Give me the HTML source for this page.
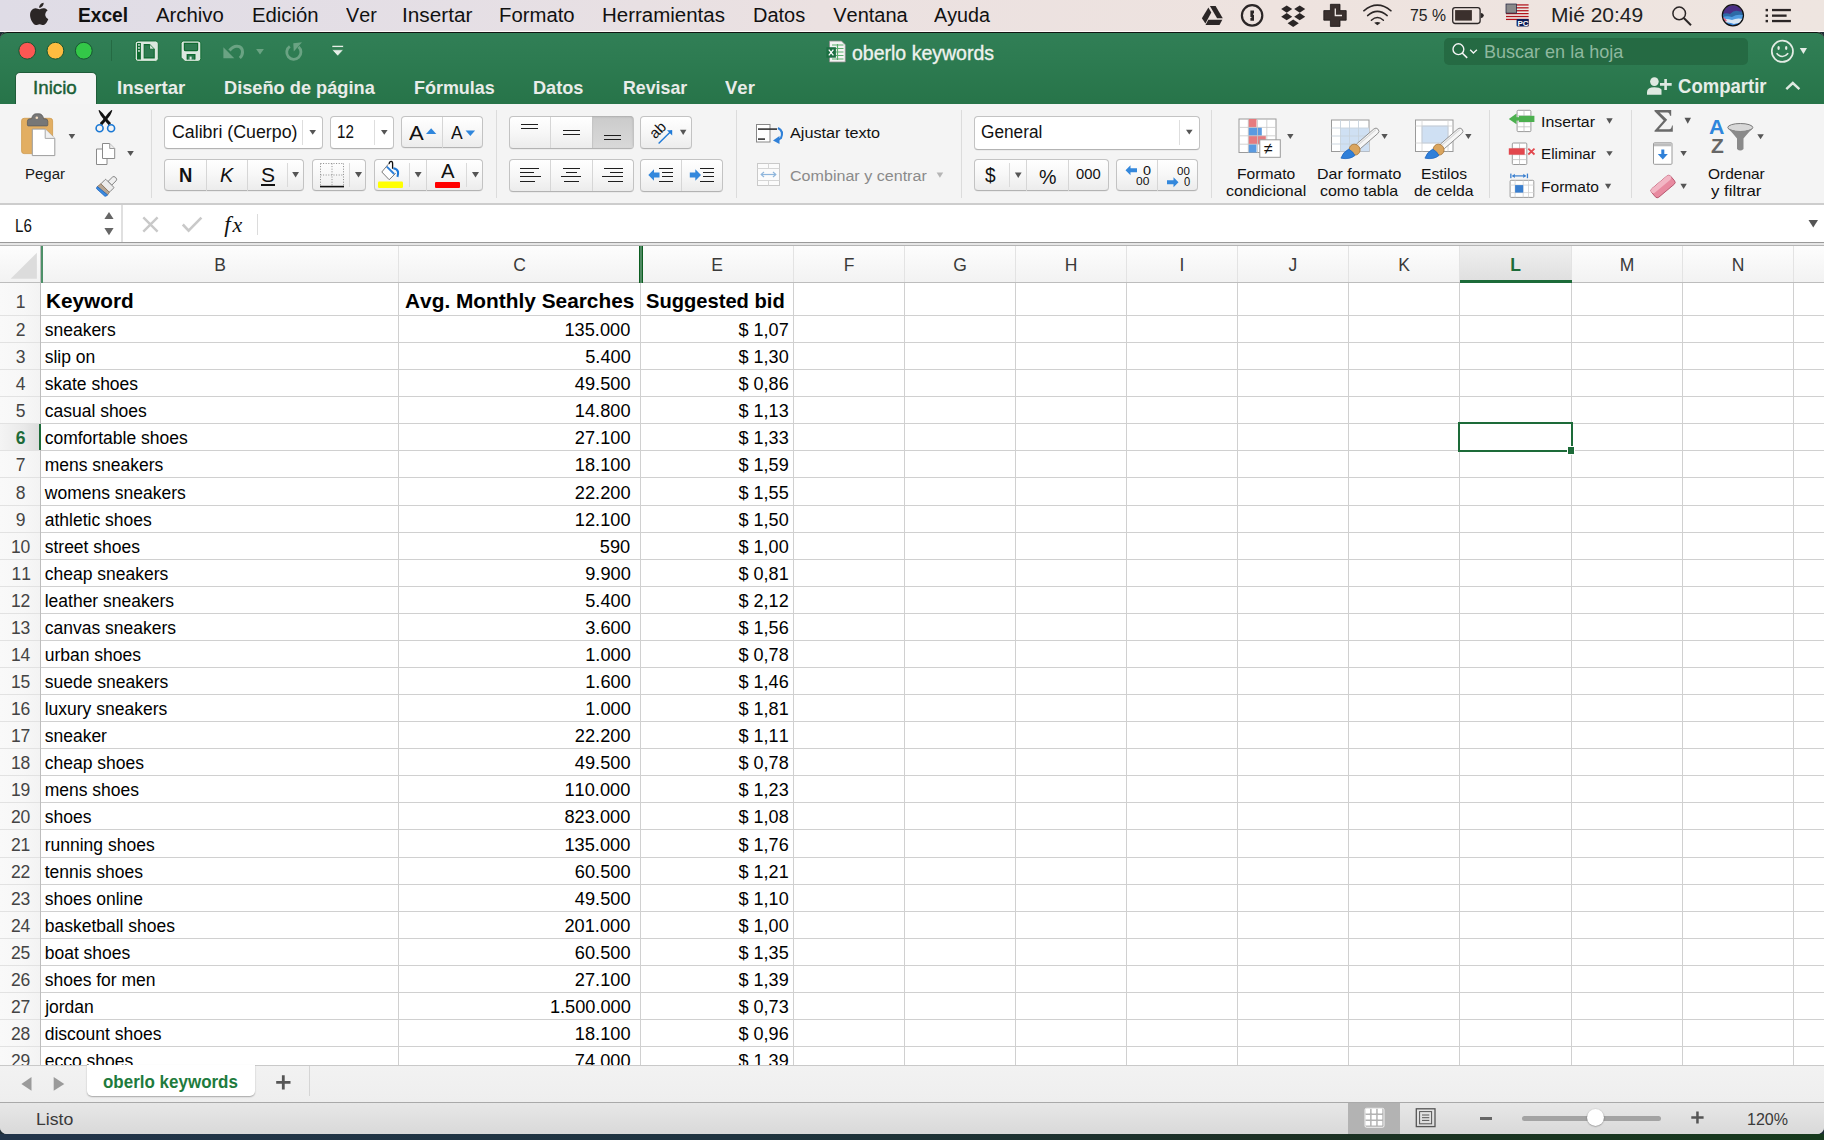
<!DOCTYPE html>
<html><head><meta charset="utf-8"><style>
html,body{margin:0;padding:0;}
body{width:1824px;height:1140px;overflow:hidden;position:relative;background:#1f2d36;font-family:"Liberation Sans",sans-serif;}
.t{position:absolute;white-space:pre;line-height:1;font-family:"Liberation Sans",sans-serif;font-kerning:none;}
.r{position:absolute;}
svg.r{overflow:visible;}
</style></head><body>
<div class="r" style="left:0px;top:0px;width:1824px;height:32px;background:linear-gradient(90deg,#dfdce6 0%,#e5dfe5 25%,#ebe1e1 45%,#eee3df 70%,#eee5e0 100%);"></div>
<div class="r" style="left:0px;top:30.5px;width:1824px;height:1.0px;background:rgba(255,250,248,0.85);"></div>
<div class="t" style="left:78.40px;top:5.37px;font-size:20px;color:#111;font-weight:bold;font-style:normal;transform:scaleX(0.9579);transform-origin:0 0;">Excel</div>
<div class="t" style="left:156.20px;top:5.37px;font-size:20px;color:#111;font-weight:normal;font-style:normal;transform:scaleX(1.0165);transform-origin:0 0;">Archivo</div>
<div class="t" style="left:251.90px;top:5.37px;font-size:20px;color:#111;font-weight:normal;font-style:normal;transform:scaleX(1.0152);transform-origin:0 0;">Edición</div>
<div class="t" style="left:345.70px;top:5.37px;font-size:20px;color:#111;font-weight:normal;font-style:normal;transform:scaleX(0.9867);transform-origin:0 0;">Ver</div>
<div class="t" style="left:402.30px;top:5.37px;font-size:20px;color:#111;font-weight:normal;font-style:normal;transform:scaleX(1.0383);transform-origin:0 0;">Insertar</div>
<div class="t" style="left:499.30px;top:5.37px;font-size:20px;color:#111;font-weight:normal;font-style:normal;transform:scaleX(1.0161);transform-origin:0 0;">Formato</div>
<div class="t" style="left:602.40px;top:5.37px;font-size:20px;color:#111;font-weight:normal;font-style:normal;transform:scaleX(1.0242);transform-origin:0 0;">Herramientas</div>
<div class="t" style="left:753.00px;top:5.37px;font-size:20px;color:#111;font-weight:normal;font-style:normal;">Datos</div>
<div class="t" style="left:833.20px;top:5.37px;font-size:20px;color:#111;font-weight:normal;font-style:normal;">Ventana</div>
<div class="t" style="left:934.00px;top:5.37px;font-size:20px;color:#111;font-weight:normal;font-style:normal;transform:scaleX(0.9858);transform-origin:0 0;">Ayuda</div>
<div class="t" style="left:1409.50px;top:6.90px;font-size:17.4px;color:#222;font-weight:normal;font-style:normal;transform:scaleX(0.9074);transform-origin:0 0;">75 %</div>
<svg class="r" style="left:28px;top:2px" width="22" height="25" viewBox="0 0 22 25"><g transform="translate(0.6 -0.2) scale(1.1 1.1)"><path d="M15.1 11.7c-.03-2.6 2.1-3.8 2.2-3.9-1.2-1.8-3.1-2-3.7-2-1.6-.16-3.1.93-3.9.93-.8 0-2-.9-3.3-.9-1.7.03-3.3 1-4.2 2.5-1.8 3.1-.5 7.7 1.3 10.2.85 1.25 1.9 2.6 3.2 2.6 1.3-.05 1.8-.83 3.3-.83 1.6 0 2 .83 3.4.8 1.4-.03 2.3-1.27 3.1-2.5 1-1.4 1.4-2.8 1.4-2.9-.03-.01-2.7-1.04-2.8-4.1zM12.6 4.1c.7-.86 1.2-2.05 1.05-3.25-1.02.04-2.25.68-2.98 1.53-.65.75-1.23 1.97-1.07 3.13 1.13.09 2.29-.58 3-1.41z" fill="#2b2626"/></g></svg>
<svg class="r" style="left:1200px;top:4px" width="25" height="23" viewBox="0 0 25 23"><g fill="#2b2626">
      <polygon points="9.9,2 15.6,2 22.8,14.3 17.1,14.3"/>
      <polygon points="8.4,3.4 11.3,8.4 5.4,19.6 1.9,14.3"/>
      <polygon points="8.3,15.8 22.3,15.8 19.5,21 5.5,21"/>
    </g></svg>
<svg class="r" style="left:1239px;top:3px" width="27" height="25" viewBox="0 0 27 25"><circle cx="13.1" cy="12.4" r="10.2" fill="none" stroke="#2b2626" stroke-width="2.2"/>
      <path d="M11.4 7.5 h3.6 v3 h-1 v1.3 h1 v5.9 h-3.6 v-2.6 h1 v-1 h-1z" fill="#2b2626"/></svg>
<svg class="r" style="left:1279px;top:3px" width="28" height="26" viewBox="0 0 28 26"><g fill="#2b2626"><polygon points="2.2,6.1 7.7,2.4999999999999996 13.2,6.1 7.7,9.7"/><polygon points="15.2,6.1 20.7,2.4999999999999996 26.2,6.1 20.7,9.7"/><polygon points="2.2,13.7 7.7,10.1 13.2,13.7 7.7,17.3"/><polygon points="15.2,13.7 20.7,10.1 26.2,13.7 20.7,17.3"/><polygon points="8.6,20.3 14.2,16.5 19.799999999999997,20.3 14.2,24.1"/></g></svg>
<svg class="r" style="left:1322px;top:3px" width="26" height="26" viewBox="0 0 26 26"><path d="M8.4 1.3 h9.6 v6.3 h6.2 v9.6 h-6.2 v6.2 h-9.6 v-6.2 h-6.6 v-9.6 h6.6z" fill="#3a302e" stroke="#1c1616" stroke-width="0.8"/>
      <path d="M13.3 5.5 v7 h6.7" fill="none" stroke="#f0e8e6" stroke-width="1.3"/></svg>
<svg class="r" style="left:1362px;top:3px" width="31" height="25" viewBox="0 0 31 25"><g fill="none" stroke="#2b2626" stroke-width="1.5" stroke-linecap="round">
      <path d="M1.8 7.8 Q15.4 -3.5 29 7.8"/>
      <path d="M5.6 12.6 Q15.4 4.2 25.2 12.6"/>
      <path d="M9.4 17.2 Q15.4 11.8 21.4 17.2"/>
    </g><path d="M12.2 19.8 L15.4 22.3 L18.6 19.8 Q15.4 18 12.2 19.8z" fill="#2b2626"/></svg>
<svg class="r" style="left:1450px;top:5px" width="38" height="21" viewBox="0 0 38 21"><rect x="2.7" y="2.6" width="27.4" height="15.9" rx="2.4" fill="none" stroke="#2b2626" stroke-width="1.3"/>
      <rect x="5.1" y="5.1" width="16.8" height="10.5" fill="#3b302d"/>
      <path d="M30.8 8 q3 0.5 3 2.6 q0 2 -3 2.6z" fill="#2b2626"/></svg>
<svg class="r" style="left:1506px;top:4px" width="24" height="24" viewBox="0 0 24 24"><rect x="0" y="0" width="22.6" height="15.6" fill="#ece8e4"/><rect x="0" y="0.30" width="22.6" height="1.25" fill="#b3131b"/><rect x="0" y="3.20" width="22.6" height="1.25" fill="#b3131b"/><rect x="0" y="6.10" width="22.6" height="1.25" fill="#b3131b"/><rect x="0" y="9.00" width="22.6" height="1.25" fill="#b3131b"/><rect x="0" y="11.90" width="22.6" height="1.25" fill="#b3131b"/><rect x="0" y="14.80" width="22.6" height="1.25" fill="#b3131b"/>
      <rect x="0" y="0" width="10.6" height="9.1" fill="#8a8a8a" stroke="#1a1d3a" stroke-width="0.7"/>
      <rect x="10.6" y="15" width="12.2" height="7.6" rx="1" fill="#0b1a55"/>
      <text x="11.5" y="21.8" font-family="Liberation Sans" font-weight="bold" font-size="8" fill="#fff">PC</text></svg>
<svg class="r" style="left:1670px;top:4px" width="24" height="24" viewBox="0 0 24 24"><circle cx="9.2" cy="9.4" r="6.3" fill="none" stroke="#2b2626" stroke-width="1.5"/>
      <path d="M13.8 14 L21 21.3" stroke="#2b2626" stroke-width="2"/></svg>
<svg class="r" style="left:1720px;top:3px" width="26" height="26" viewBox="0 0 26 26"><defs><clipPath id="sc"><circle cx="12.9" cy="12.3" r="10.4"/></clipPath></defs>
      <g clip-path="url(#sc)"><rect x="0" y="0" width="26" height="26" fill="#4b2f86"/>
      <path d="M0 12 Q6 9 10 11 Q14 7 18 8 Q22 9 26 8 V26 H0z" fill="#2d6aa6"/>
      <path d="M0 15 Q6 12 12 14 Q18 10 26 13 V26 H0z" fill="#4f9be0"/>
      <path d="M0 17 Q6 15 12 17 Q18 14 26 17 V26 H0z" fill="#d9e6f2"/>
      <path d="M0 21 Q8 18 14 21 Q20 19 26 21 V26 H0z" fill="#3d8be0"/>
      <path d="M1 14 Q5 14 7 18 Q4 19 1 18z" fill="#e06a8a"/></g>
      <circle cx="12.9" cy="12.3" r="10.6" fill="none" stroke="#111" stroke-width="1.2"/></svg>
<svg class="r" style="left:1764px;top:6px" width="30" height="20" viewBox="0 0 30 20"><g fill="#2b2626">
      <rect x="1.6" y="2.9" width="2.4" height="2.4"/><rect x="1.6" y="8.5" width="2.4" height="2.4"/><rect x="1.6" y="13.9" width="2.4" height="2.4"/>
      <rect x="8" y="2.9" width="18.9" height="2.3"/><rect x="8" y="8.5" width="14.6" height="2.3"/><rect x="8" y="13.9" width="18.9" height="2.3"/>
    </g></svg>
<div class="t" style="left:1551.30px;top:6.06px;font-size:19.5px;color:#222;font-weight:normal;font-style:normal;transform:scaleX(1.0770);transform-origin:0 0;">Mié 20:49</div>
<div class="r" style="left:0px;top:32px;width:1824px;height:1102px;background:#f0f0f0;border-radius:7px 7px 7px 7px;overflow:hidden;"></div>
<div class="r" style="left:0px;top:31.5px;width:1824px;height:72.5px;background:linear-gradient(180deg,#317f56 0%,#2d7b51 40%,#277449 100%);border-radius:7px 7px 0 0;border-top:1.5px solid #111613;box-sizing:border-box;"></div>
<div class="r" style="left:14.5px;top:71.5px;width:82.0px;height:32.5px;background:#f5f5f5;border-radius:5px 5px 0 0;border:1px solid #1f5c39;border-bottom:none;box-sizing:border-box;"></div>
<div class="t" style="left:32.50px;top:78.22px;font-size:19px;color:#1a5f36;font-weight:normal;font-style:normal;transform:scaleX(0.9873);transform-origin:0 0;-webkit-text-stroke:0.45px #1a5f36;">Inicio</div>
<div class="t" style="left:117.00px;top:78.22px;font-size:19px;color:#e9ece9;font-weight:bold;font-style:normal;transform:scaleX(0.9809);transform-origin:0 0;">Insertar</div>
<div class="t" style="left:224.40px;top:78.22px;font-size:19px;color:#e9ece9;font-weight:bold;font-style:normal;transform:scaleX(0.9587);transform-origin:0 0;">Diseño de página</div>
<div class="t" style="left:413.50px;top:78.22px;font-size:19px;color:#e9ece9;font-weight:bold;font-style:normal;transform:scaleX(0.9439);transform-origin:0 0;">Fórmulas</div>
<div class="t" style="left:533.30px;top:78.22px;font-size:19px;color:#e9ece9;font-weight:bold;font-style:normal;transform:scaleX(0.9551);transform-origin:0 0;">Datos</div>
<div class="t" style="left:623.30px;top:78.22px;font-size:19px;color:#e9ece9;font-weight:bold;font-style:normal;transform:scaleX(0.9347);transform-origin:0 0;">Revisar</div>
<div class="t" style="left:725.40px;top:78.22px;font-size:19px;color:#e9ece9;font-weight:bold;font-style:normal;transform:scaleX(0.9748);transform-origin:0 0;">Ver</div>
<div class="t" style="left:852.20px;top:43.37px;font-size:20px;color:#eef2ee;font-weight:normal;font-style:normal;transform:scaleX(0.9753);transform-origin:0 0;-webkit-text-stroke:0.35px #eef2ee;">oberlo keywords</div>
<div class="r" style="left:1444px;top:38px;width:304px;height:27px;background:#256a43;border-radius:5px;"></div>
<div class="t" style="left:1484.00px;top:42.96px;font-size:18.5px;color:#8fb89f;font-weight:normal;font-style:normal;transform:scaleX(0.9741);transform-origin:0 0;">Buscar en la hoja</div>
<div class="t" style="left:1677.70px;top:77.06px;font-size:19.5px;color:#e6ede8;font-weight:bold;font-style:normal;transform:scaleX(0.9505);transform-origin:0 0;">Compartir</div>
<svg class="r" style="left:14px;top:37px" width="84" height="28" viewBox="0 0 84 28"><circle cx="13.2" cy="13.7" r="8.4" fill="#fc5753" stroke="#185532" stroke-width="1"/>
      <circle cx="41.4" cy="13.7" r="8.4" fill="#fdbc40" stroke="#185532" stroke-width="1"/>
      <circle cx="69.8" cy="13.7" r="8.4" fill="#33c748" stroke="#185532" stroke-width="1"/></svg>
<div class="r" style="left:111px;top:40px;width:1px;height:21px;background:#256a43;"></div>
<svg class="r" style="left:133px;top:39px" width="28" height="25" viewBox="0 0 28 25"><rect x="2.2" y="2" width="23.1" height="20.4" rx="2.8" fill="#dce8df" stroke="#0f6a30" stroke-width="0.9"/>
      <rect x="4" y="4" width="3.9" height="16.5" fill="#0f6a30"/>
      <rect x="5.1" y="5.2" width="1.7" height="1.5" fill="#e6efe8"/><rect x="5.1" y="8.2" width="1.7" height="1.5" fill="#e6efe8"/><rect x="5.1" y="11.2" width="1.7" height="1.5" fill="#e6efe8"/>
      <path d="M11.2 5.6 h5.4 l4.6 4.6 v8.7 h-10z" fill="#2e7b51" stroke="#0f6a30" stroke-width="1.1"/>
      <path d="M16.6 5.6 v4.6 h4.6" fill="#dce8df" stroke="#0f6a30" stroke-width="0.9"/></svg>
<svg class="r" style="left:179px;top:39px" width="25" height="25" viewBox="0 0 25 25"><path d="M4.5 2 H19 Q21.8 2 21.8 4.8 V19.6 Q21.8 22.4 19 22.4 H6 L2.1 18.5 V4.5 Q2.1 2 4.5 2z" fill="#dce8df" stroke="#0f6a30" stroke-width="0.9"/>
      <path d="M5.4 4.3 H18.6 V10.4 Q18.6 11.7 17.3 11.7 H6.7 Q5.4 11.7 5.4 10.4z" fill="#2e7b51" stroke="#0f6a30" stroke-width="1.2"/>
      <path d="M8.3 20.6 V15.6 H15.8 V20.6" fill="#2e7b51" stroke="#0f6a30" stroke-width="1.4"/>
      <rect x="10.6" y="17.6" width="2" height="3" fill="#dce8df"/></svg>
<svg class="r" style="left:220px;top:40px" width="30" height="22" viewBox="0 0 30 22"><path d="M9.5 10.5 Q13 6 17 6.2 Q22.5 6.5 22.5 12 Q22.5 15.5 19.8 18" fill="none" stroke="#6aa383" stroke-width="3"/>
      <path d="M3.4 7.3 V18.2 H14.3z" fill="#6aa383"/></svg>
<svg class="r" style="left:255px;top:48px" width="11" height="9" viewBox="0 0 11 9"><polygon points="1.10,1.00 8.90,1.00 5.00,6.50" fill="#6aa383"/></svg>
<svg class="r" style="left:282px;top:40px" width="24" height="24" viewBox="0 0 24 24"><path d="M7.8 6.4 A7.1 7.1 0 1 0 16.5 6.9" fill="none" stroke="#6aa383" stroke-width="2.8"/>
      <path d="M11.3 3.2 L20 2.3 L11.8 11.5z" fill="#6aa383"/></svg>
<svg class="r" style="left:330px;top:43px" width="16" height="15" viewBox="0 0 16 15"><rect x="2" y="2.3" width="11.4" height="2" fill="#e6eee8" stroke="#136c36" stroke-width="0.5"/>
      <path d="M2 6.8 H13.4 L7.7 13z" fill="#e6eee8" stroke="#136c36" stroke-width="0.5"/></svg>
<svg class="r" style="left:824px;top:39px" width="24" height="25" viewBox="0 0 24 25"><path d="M5.5 2 H17.5 L21.3 5.8 V23 H5.5z" fill="#f4f4f4" stroke="#8a8a8a" stroke-width="0.8"/>
      <path d="M8 6 h11.5 M8 9.5 h11.5 M8 13 h11.5 M8 16.5 h11.5 M8 20 h11.5 M13.5 5 v16" stroke="#5cae6e" stroke-width="1.2"/>
      <rect x="2.4" y="8.2" width="9.5" height="10.5" fill="#1d7043"/>
      <path d="M4.8 10.6 l4.6 5.8 M9.4 10.6 l-4.6 5.8" stroke="#fff" stroke-width="1.3"/></svg>
<svg class="r" style="left:1448px;top:40px" width="34" height="22" viewBox="0 0 34 22"><circle cx="10.4" cy="9.2" r="5.4" fill="none" stroke="#f4f4f4" stroke-width="1.4"/>
      <path d="M14.2 13 L19.2 17.9" stroke="#f4f4f4" stroke-width="1.6"/>
      <path d="M22.2 9.7 L25.4 13 L28.9 9.7" fill="none" stroke="#f4f4f4" stroke-width="1.3"/></svg>
<svg class="r" style="left:1768px;top:37px" width="42" height="29" viewBox="0 0 42 29"><circle cx="14.4" cy="14.3" r="10.6" fill="none" stroke="#e3ece5" stroke-width="1.7"/>
      <ellipse cx="10.6" cy="11" rx="1.2" ry="1.9" fill="#e3ece5"/><ellipse cx="18.2" cy="11" rx="1.2" ry="1.9" fill="#e3ece5"/>
      <path d="M8.6 16.2 Q14.4 22.8 20.2 16.2" fill="none" stroke="#e3ece5" stroke-width="1.7"/>
      <path d="M31.8 11 H39 L35.4 17z" fill="#e3ece5"/></svg>
<svg class="r" style="left:1645px;top:76px" width="29" height="21" viewBox="0 0 29 21"><circle cx="9.4" cy="5.6" r="4.3" fill="#dfe9e1"/>
      <path d="M2 18.7 V16 Q2 11.2 9.4 11.2 Q14.5 11.2 16.5 13.5 V18.7z" fill="#dfe9e1"/>
      <path d="M15 8.4 H26.7 M20.6 2.9 V14" stroke="#dfe9e1" stroke-width="2.6"/></svg>
<svg class="r" style="left:1783px;top:80px" width="20" height="13" viewBox="0 0 20 13"><path d="M3.3 9.1 L9.8 3 L16.4 9.1" fill="none" stroke="#dfe9e1" stroke-width="2.4"/></svg>
<div class="r" style="left:0px;top:104px;width:1824px;height:100px;background:#f4f4f4;"></div>
<div class="r" style="left:0px;top:203px;width:1824px;height:2px;background:#cdcdcd;"></div>
<svg class="r" style="left:18px;top:110px" width="42" height="50" viewBox="0 0 42 50">
      <rect x="3.6" y="8.3" width="31" height="35.3" rx="2.5" fill="#e2ae62" stroke="#cf9a4c" stroke-width="0.8"/>
      <path d="M9.4 14.9 v-3.5 q0-2.6 2.6-2.6 h1.6 q1-5 4.6-5 h2.8 q3.6 0 4.6 5 h1.6 q2.6 0 2.6 2.6 v3.5 q0 1 -1 1 h-18.4 q-1 0-1-1z" fill="#777" stroke="#5d5d5d" stroke-width="0.8"/>
      <circle cx="18.8" cy="7.8" r="1.3" fill="#f3dcc0"/>
      <path d="M14.3 19.1 h12.9 l9.6 9.3 v17.2 h-22.5z" fill="#fff" stroke="#9c9c9c" stroke-width="1"/>
      <path d="M27.2 19.1 v9.3 h9.6" fill="#f0f0f0" stroke="#a8a8a8" stroke-width="1"/>
    </svg>
<svg class="r" style="left:67px;top:133px" width="10" height="9" viewBox="0 0 10 9"><polygon points="1.60,1.00 8.20,1.00 4.90,6.00" fill="#555"/></svg>
<div class="t" style="left:24.90px;top:166.95px;font-size:14.9px;color:#1a1a1a;font-weight:normal;font-style:normal;transform:scaleX(1.0080);transform-origin:0 0;">Pegar</div>
<svg class="r" style="left:92px;top:108px" width="28" height="28" viewBox="0 0 28 28">
      <path d="M6.46 2.59 L6.92 3.62 L7.38 4.65 L7.86 5.67 L8.34 6.69 L8.88 7.69 L9.55 8.58 L10.23 9.47 L10.92 10.36 L11.63 11.23 L12.34 12.10 L13.06 12.97 L13.79 13.83 L14.52 14.69 L15.27 15.54 L16.03 16.38 L16.80 17.22 L19.00 15.18 L18.25 14.36 L17.51 13.54 L16.78 12.71 L16.06 11.88 L15.35 11.04 L14.65 10.20 L13.96 9.35 L13.28 8.49 L12.60 7.63 L11.94 6.77 L11.28 5.90 L10.51 5.12 L9.70 4.35 L8.91 3.58 L8.12 2.80 L7.34 2.01z" fill="#111"/>
      <path d="M19.46 2.01 L18.68 2.80 L17.89 3.58 L17.10 4.35 L16.29 5.12 L15.52 5.90 L14.86 6.77 L14.20 7.63 L13.52 8.49 L12.84 9.35 L12.15 10.20 L11.45 11.04 L10.74 11.88 L10.02 12.71 L9.29 13.54 L8.55 14.36 L7.80 15.18 L10.00 17.22 L10.77 16.38 L11.53 15.54 L12.28 14.69 L13.01 13.83 L13.74 12.97 L14.46 12.10 L15.17 11.23 L15.88 10.36 L16.57 9.47 L17.25 8.58 L17.92 7.69 L18.46 6.69 L18.94 5.67 L19.42 4.65 L19.88 3.62 L20.34 2.59z" fill="#111"/>
      <circle cx="7.6" cy="20.2" r="3.5" fill="none" stroke="#1a78d4" stroke-width="1.6"/>
      <circle cx="19.1" cy="20.2" r="3.5" fill="none" stroke="#1a78d4" stroke-width="1.6"/>
    </svg>
<svg class="r" style="left:94px;top:141px" width="24" height="26" viewBox="0 0 24 26">
      <path d="M2.5 8 h10.5 v15.5 h-10.5z" fill="#fff" stroke="#8a8a8a" stroke-width="1"/>
      <path d="M8.5 2.5 h7.2 l5 5 v10 h-12.2z" fill="#fff" stroke="#8a8a8a" stroke-width="1"/>
      <path d="M15.7 2.5 v5 h5" fill="#ececec" stroke="#9a9a9a" stroke-width="1"/>
    </svg>
<svg class="r" style="left:126px;top:150px" width="10" height="9" viewBox="0 0 10 9"><polygon points="1.20,1.00 7.80,1.00 4.50,6.00" fill="#555"/></svg>
<svg class="r" style="left:90px;top:172px" width="32" height="28" viewBox="0 0 32 28">
      <g transform="matrix(0.7071 -0.7071 0.7071 0.7071 17.5 13.7)">
        <path d="M3.35 -2.6 H9.5 Q11.6 -2.6 11.6 0 Q11.6 2.6 9.5 2.6 H3.35z" fill="#efefef" stroke="#7d7d7d" stroke-width="0.9"/>
        <rect x="-3.35" y="-6" width="6.7" height="12" rx="0.8" fill="#ececec" stroke="#7d7d7d" stroke-width="0.9"/>
        <path d="M-3.35 -6 L-3.35 6 L-6.5 6.6 L-7.8 -6.6z" fill="#b5a594" stroke="#8c6e4e" stroke-width="0.7"/>
        <path d="M-6.5 6.6 L-7.8 -6.6 Q-9.6 -6.4 -9.9 -5.5 L-9.3 5.5 Q-9 6.6 -6.5 6.6z" fill="#3a8be0" stroke="#1660c0" stroke-width="0.7"/>
      </g>
    </svg>
<div class="r" style="left:151.0px;top:110px;width:1.0px;height:87.5px;background:#dcdcdc;"></div>
<div class="r" style="left:164px;top:116px;width:159px;height:33px;background:#fff;border:1px solid #c3c3c3;border-bottom-color:#b3b3b3;border-radius:4px;box-sizing:border-box;box-shadow:0 0.5px 0.5px rgba(0,0,0,0.08);"></div>
<div class="r" style="left:302px;top:120px;width:1px;height:25px;background:#dedede;"></div>
<svg class="r" style="left:308px;top:129px" width="10" height="8" viewBox="0 0 10 8"><polygon points="1.40,1.00 8.00,1.00 4.70,5.80" fill="#555"/></svg>
<div class="t" style="left:171.60px;top:123.87px;font-size:17.5px;color:#111;font-weight:normal;font-style:normal;transform:scaleX(1.0158);transform-origin:0 0;">Calibri (Cuerpo)</div>
<div class="r" style="left:330px;top:116px;width:64px;height:33px;background:#fff;border:1px solid #c3c3c3;border-bottom-color:#b3b3b3;border-radius:4px;box-sizing:border-box;box-shadow:0 0.5px 0.5px rgba(0,0,0,0.08);"></div>
<div class="r" style="left:374px;top:120px;width:1px;height:25px;background:#dedede;"></div>
<svg class="r" style="left:380px;top:129px" width="10" height="8" viewBox="0 0 10 8"><polygon points="1.00,1.00 7.60,1.00 4.30,5.80" fill="#555"/></svg>
<div class="t" style="left:336.80px;top:123.87px;font-size:17.5px;color:#111;font-weight:normal;font-style:normal;transform:scaleX(0.8649);transform-origin:0 0;">12</div>
<div class="r" style="left:401px;top:116px;width:82px;height:32px;background:linear-gradient(180deg,#ffffff 0%,#f7f7f7 50%,#ececec 100%);border:1px solid #c3c3c3;border-bottom-color:#b3b3b3;border-radius:4px;box-sizing:border-box;box-shadow:0 0.5px 0.5px rgba(0,0,0,0.08);"></div>
<div class="r" style="left:442px;top:117px;width:1px;height:31px;background:#d6d6d6;"></div>
<div class="t" style="left:408.80px;top:121.52px;font-size:21px;color:#111;font-weight:normal;font-style:normal;transform:scaleX(1.0519);transform-origin:0 0;">A</div>
<svg class="r" style="left:425px;top:127px" width="14" height="9" viewBox="0 0 14 9"><polygon points="1.00,7.00 11.30,7.00 6.15,1.20" fill="#2f86dc"/></svg>
<div class="t" style="left:451.30px;top:124.06px;font-size:18px;color:#111;font-weight:normal;font-style:normal;transform:scaleX(0.9701);transform-origin:0 0;">A</div>
<svg class="r" style="left:464px;top:129px" width="13" height="9" viewBox="0 0 13 9"><polygon points="1.60,1.40 11.10,1.40 6.35,7.00" fill="#2f86dc"/></svg>
<div class="r" style="left:164px;top:159px;width:140px;height:32px;background:linear-gradient(180deg,#ffffff 0%,#f7f7f7 50%,#ececec 100%);border:1px solid #c3c3c3;border-bottom-color:#b3b3b3;border-radius:4px;box-sizing:border-box;box-shadow:0 0.5px 0.5px rgba(0,0,0,0.08);"></div>
<div class="r" style="left:206px;top:159.5px;width:1px;height:31.0px;background:#d6d6d6;"></div>
<div class="r" style="left:247px;top:159.5px;width:1px;height:31.0px;background:#d6d6d6;"></div>
<div class="r" style="left:287px;top:163px;width:1px;height:24px;background:#dadada;"></div>
<div class="t" style="left:179.20px;top:166.06px;font-size:19.5px;color:#111;font-weight:bold;font-style:normal;transform:scaleX(0.9473);transform-origin:0 0;">N</div>
<div class="t" style="left:220.00px;top:166.06px;font-size:19.5px;color:#111;font-weight:normal;font-style:italic;transform:scaleX(1.0184);transform-origin:0 0;">K</div>
<div class="t" style="left:261.00px;top:166.06px;font-size:19.5px;color:#111;font-weight:normal;font-style:normal;transform:scaleX(1.0796);transform-origin:0 0;">S</div>
<div class="r" style="left:261px;top:184px;width:14px;height:1.5px;background:#111;"></div>
<svg class="r" style="left:291px;top:171px" width="10" height="9" viewBox="0 0 10 9"><polygon points="1.20,1.00 8.00,1.00 4.60,6.50" fill="#555"/></svg>
<div class="r" style="left:312px;top:159px;width:54px;height:32px;background:linear-gradient(180deg,#ffffff 0%,#f7f7f7 50%,#ececec 100%);border:1px solid #c3c3c3;border-bottom-color:#b3b3b3;border-radius:4px;box-sizing:border-box;box-shadow:0 0.5px 0.5px rgba(0,0,0,0.08);"></div>
<svg class="r" style="left:318px;top:161px" width="28" height="28" viewBox="0 0 28 28">
      <g fill="none" stroke="#8a8a8a" stroke-width="1" stroke-dasharray="1 1.6">
        <path d="M2.5 2.5 H25.5 M2.5 14 H25.5 M2.5 2.5 V25 M14 2.5 V25 M25.5 2.5 V25"/>
      </g>
      <rect x="2" y="24.8" width="24" height="1.6" fill="#111"/>
    </svg>
<div class="r" style="left:349px;top:163px;width:1px;height:24px;background:#dadada;"></div>
<svg class="r" style="left:354px;top:171px" width="11" height="9" viewBox="0 0 11 9"><polygon points="1.00,1.00 8.00,1.00 4.50,6.50" fill="#555"/></svg>
<div class="r" style="left:374px;top:159px;width:109px;height:32px;background:linear-gradient(180deg,#ffffff 0%,#f7f7f7 50%,#ececec 100%);border:1px solid #c3c3c3;border-bottom-color:#b3b3b3;border-radius:4px;box-sizing:border-box;box-shadow:0 0.5px 0.5px rgba(0,0,0,0.08);"></div>
<div class="r" style="left:426px;top:159.5px;width:1px;height:31.0px;background:#d6d6d6;"></div>
<div class="r" style="left:409px;top:163px;width:1px;height:24px;background:#dadada;"></div>
<div class="r" style="left:466px;top:163px;width:1px;height:24px;background:#dadada;"></div>
<svg class="r" style="left:378px;top:159px" width="26" height="31" viewBox="0 0 26 31">
      <path d="M10.3 5.2 L3.8 13 L11.2 20.7 L17.7 14.3z" fill="#fff"/>
      <path d="M10.3 5.2 L3.8 13 L11.2 20.7 L17.7 14.3" fill="none" stroke="#7a7a7a" stroke-width="1"/>
      <path d="M8.8 7.6 L16.2 15" stroke="#2f80d8" stroke-width="2"/>
      <path d="M11 5 Q11.6 2.2 13.2 2.3 Q14.8 2.5 14.6 5 V9.8" stroke="#111" stroke-width="1.3" fill="none"/>
      <path d="M15.3 9.3 Q19.4 10 20 12.8 Q20.4 15.2 19.4 17.8" stroke="#1f78d6" stroke-width="2.1" fill="none"/>
      <rect x="0" y="22.5" width="25" height="6.4" rx="1.2" fill="#ffff00"/>
    </svg>
<svg class="r" style="left:413px;top:171px" width="10" height="9" viewBox="0 0 10 9"><polygon points="1.70,1.00 8.60,1.00 5.15,6.50" fill="#555"/></svg>
<div class="t" style="left:440.60px;top:162.06px;font-size:19.5px;color:#111;font-weight:normal;font-style:normal;transform:scaleX(1.0409);transform-origin:0 0;">A</div>
<div class="r" style="left:435px;top:181.5px;width:25px;height:6.5px;background:#f00;border-radius:1px;"></div>
<svg class="r" style="left:471px;top:171px" width="11" height="9" viewBox="0 0 11 9"><polygon points="1.00,1.00 8.00,1.00 4.50,6.50" fill="#555"/></svg>
<div class="r" style="left:496.2px;top:110px;width:1.0px;height:87.5px;background:#dcdcdc;"></div>
<div class="r" style="left:509px;top:116px;width:125px;height:33px;background:linear-gradient(180deg,#ffffff 0%,#f7f7f7 50%,#ececec 100%);border:1px solid #c3c3c3;border-bottom-color:#b3b3b3;border-radius:4px;box-sizing:border-box;box-shadow:0 0.5px 0.5px rgba(0,0,0,0.08);"></div>
<div class="r" style="left:592px;top:116.3px;width:41.299999999999955px;height:31.89999999999999px;background:linear-gradient(180deg,#cbcbcb,#d9d9d9);border-radius:0 3px 3px 0;box-shadow:inset 0 1px 2px rgba(0,0,0,.15);"></div>
<div class="r" style="left:550px;top:116.5px;width:1px;height:31.5px;background:#d6d6d6;"></div>
<div class="r" style="left:592px;top:116.5px;width:1px;height:31.5px;background:#c6c6c6;"></div>
<div class="r" style="left:521.3px;top:124px;width:17.100000000000023px;height:1.25px;background:#1e1e1e;"></div>
<div class="r" style="left:521.3px;top:128px;width:17.100000000000023px;height:1.25px;background:#1e1e1e;"></div>
<div class="r" style="left:562.8px;top:130px;width:17.100000000000023px;height:1.25px;background:#1e1e1e;"></div>
<div class="r" style="left:562.8px;top:134px;width:17.100000000000023px;height:1.25px;background:#1e1e1e;"></div>
<div class="r" style="left:604.2px;top:135px;width:16.799999999999955px;height:1.25px;background:#1e1e1e;"></div>
<div class="r" style="left:604.2px;top:139px;width:16.799999999999955px;height:1.25px;background:#1e1e1e;"></div>
<div class="r" style="left:640px;top:116px;width:52px;height:33px;background:linear-gradient(180deg,#ffffff 0%,#f7f7f7 50%,#ececec 100%);border:1px solid #c3c3c3;border-bottom-color:#b3b3b3;border-radius:4px;box-sizing:border-box;box-shadow:0 0.5px 0.5px rgba(0,0,0,0.08);"></div>
<svg class="r" style="left:646px;top:119px" width="30" height="27" viewBox="0 0 30 27">
      <text x="0" y="0" transform="translate(9.3 20.6) rotate(-45)" font-family="Liberation Sans" font-size="15" fill="#111">ab</text>
      <path d="M12.6 24.5 L25.8 11.5" stroke="#1f7ad8" stroke-width="1.4"/>
      <path d="M21 11.2 h5.2 v5.2z" fill="#1f7ad8"/>
    </svg>
<svg class="r" style="left:679px;top:128px" width="10" height="9" viewBox="0 0 10 9"><polygon points="1.00,1.70 7.40,1.70 4.20,6.90" fill="#555"/></svg>
<div class="r" style="left:509px;top:159px;width:125px;height:33px;background:linear-gradient(180deg,#ffffff 0%,#f7f7f7 50%,#ececec 100%);border:1px solid #c3c3c3;border-bottom-color:#b3b3b3;border-radius:4px;box-sizing:border-box;box-shadow:0 0.5px 0.5px rgba(0,0,0,0.08);"></div>
<div class="r" style="left:550px;top:160px;width:1px;height:31px;background:#d6d6d6;"></div>
<div class="r" style="left:592px;top:160px;width:1px;height:31px;background:#d6d6d6;"></div>
<div class="r" style="left:520px;top:168px;width:18.5px;height:1.25px;background:#1e1e1e;"></div>
<div class="r" style="left:520px;top:172px;width:13.5px;height:1.25px;background:#1e1e1e;"></div>
<div class="r" style="left:520px;top:176px;width:21px;height:1.25px;background:#1e1e1e;"></div>
<div class="r" style="left:520px;top:181px;width:15px;height:1.25px;background:#1e1e1e;"></div>
<div class="r" style="left:563px;top:168px;width:17px;height:1.25px;background:#1e1e1e;"></div>
<div class="r" style="left:566px;top:172px;width:11px;height:1.25px;background:#1e1e1e;"></div>
<div class="r" style="left:561.4px;top:176px;width:19.800000000000068px;height:1.25px;background:#1e1e1e;"></div>
<div class="r" style="left:564px;top:181px;width:14.5px;height:1.25px;background:#1e1e1e;"></div>
<div class="r" style="left:604px;top:168px;width:18.600000000000023px;height:1.25px;background:#1e1e1e;"></div>
<div class="r" style="left:610px;top:172px;width:12.600000000000023px;height:1.25px;background:#1e1e1e;"></div>
<div class="r" style="left:601.6px;top:176px;width:21.0px;height:1.25px;background:#1e1e1e;"></div>
<div class="r" style="left:607.5px;top:181px;width:15.100000000000023px;height:1.25px;background:#1e1e1e;"></div>
<div class="r" style="left:640px;top:159px;width:83px;height:33px;background:linear-gradient(180deg,#ffffff 0%,#f7f7f7 50%,#ececec 100%);border:1px solid #c3c3c3;border-bottom-color:#b3b3b3;border-radius:4px;box-sizing:border-box;box-shadow:0 0.5px 0.5px rgba(0,0,0,0.08);"></div>
<div class="r" style="left:681px;top:160px;width:1px;height:31px;background:#d6d6d6;"></div>
<div class="r" style="left:658.8px;top:168px;width:13.800000000000068px;height:1.25px;background:#1e1e1e;"></div>
<div class="r" style="left:662.3px;top:172px;width:10.300000000000068px;height:1.25px;background:#1e1e1e;"></div>
<div class="r" style="left:662.3px;top:176px;width:10.300000000000068px;height:1.25px;background:#1e1e1e;"></div>
<div class="r" style="left:658.8px;top:181px;width:13.800000000000068px;height:1.25px;background:#1e1e1e;"></div>
<div class="r" style="left:699.6px;top:168px;width:14.5px;height:1.25px;background:#1e1e1e;"></div>
<div class="r" style="left:703.1px;top:172px;width:11.0px;height:1.25px;background:#1e1e1e;"></div>
<div class="r" style="left:703.1px;top:176px;width:11.0px;height:1.25px;background:#1e1e1e;"></div>
<div class="r" style="left:699.6px;top:181px;width:14.5px;height:1.25px;background:#1e1e1e;"></div>
<svg class="r" style="left:646px;top:166px" width="16" height="18" viewBox="0 0 16 18"><path d="M2.3 9 L8 3.3 V6.5 H13.5 V11.5 H8 V14.7z" fill="#3488dc"/></svg>
<svg class="r" style="left:688px;top:166px" width="16" height="18" viewBox="0 0 16 18"><path d="M13 9 L7.3 3.3 V6.5 H1.8 V11.5 H7.3 V14.7z" fill="#3488dc"/></svg>
<div class="r" style="left:736.1px;top:110px;width:1.0px;height:87.5px;background:#dcdcdc;"></div>
<svg class="r" style="left:754px;top:122px" width="34" height="23" viewBox="0 0 34 23">
      <rect x="2.5" y="2.5" width="13.5" height="17.5" fill="#fff" stroke="#888" stroke-width="1"/>
      <rect x="4" y="6.3" width="19" height="1.6" fill="#333"/>
      <rect x="4" y="16.3" width="7" height="1.6" fill="#333"/>
      <path d="M24 6 q6 3 3 10 l-3 2" fill="none" stroke="#2f80d8" stroke-width="2"/>
      <path d="M19 18.5 L25.5 14 L25.5 22z" fill="#2f80d8"/>
    </svg>
<div class="t" style="left:789.90px;top:124.94px;font-size:15.5px;color:#111;font-weight:normal;font-style:normal;transform:scaleX(1.0455);transform-origin:0 0;">Ajustar texto</div>
<svg class="r" style="left:755px;top:161px" width="28" height="27" viewBox="0 0 28 27">
      <rect x="2.5" y="2.5" width="22" height="22" fill="#fbfbfb" stroke="#c9c9c9" stroke-width="1"/>
      <path d="M13.5 2.5 v5 M2.5 7.5 h22 M2.5 19.5 h22 M13.5 19.5 v5" stroke="#d5d5d5" stroke-width="1" fill="none"/>
      <path d="M6.5 13.5 h14" stroke="#8fb6dc" stroke-width="1.2"/>
      <path d="M9 11 l-2.8 2.5 l2.8 2.5 M18 11 l2.8 2.5 l-2.8 2.5" fill="none" stroke="#8fb6dc" stroke-width="1.2"/>
    </svg>
<div class="t" style="left:789.90px;top:167.94px;font-size:15.5px;color:#8a8a8a;font-weight:normal;font-style:normal;transform:scaleX(1.0377);transform-origin:0 0;">Combinar y centrar</div>
<svg class="r" style="left:935px;top:171px" width="10" height="9" viewBox="0 0 10 9"><polygon points="1.60,1.40 8.20,1.40 4.90,6.70" fill="#b5b5b5"/></svg>
<div class="r" style="left:960.7px;top:110px;width:1.0px;height:87.5px;background:#dcdcdc;"></div>
<div class="r" style="left:974px;top:116px;width:226px;height:34px;background:#fff;border:1px solid #c3c3c3;border-bottom-color:#b3b3b3;border-radius:4px;box-sizing:border-box;box-shadow:0 0.5px 0.5px rgba(0,0,0,0.08);"></div>
<div class="r" style="left:1179px;top:120px;width:1px;height:25px;background:#dedede;"></div>
<svg class="r" style="left:1185px;top:128px" width="10" height="8" viewBox="0 0 10 8"><polygon points="1.00,1.70 7.60,1.70 4.30,6.60" fill="#555"/></svg>
<div class="t" style="left:981.00px;top:123.87px;font-size:17.5px;color:#111;font-weight:normal;font-style:normal;transform:scaleX(0.9856);transform-origin:0 0;">General</div>
<div class="r" style="left:974px;top:159px;width:135px;height:32px;background:linear-gradient(180deg,#ffffff 0%,#f7f7f7 50%,#ececec 100%);border:1px solid #c3c3c3;border-bottom-color:#b3b3b3;border-radius:4px;box-sizing:border-box;box-shadow:0 0.5px 0.5px rgba(0,0,0,0.08);"></div>
<div class="r" style="left:1026px;top:159.5px;width:1px;height:31.0px;background:#d6d6d6;"></div>
<div class="r" style="left:1068px;top:159.5px;width:1px;height:31.0px;background:#d6d6d6;"></div>
<div class="r" style="left:1009px;top:163px;width:1px;height:24px;background:#dadada;"></div>
<div class="t" style="left:985.00px;top:165.37px;font-size:20px;color:#111;font-weight:normal;font-style:normal;transform:scaleX(0.9550);transform-origin:0 0;">$</div>
<svg class="r" style="left:1013px;top:171px" width="10" height="9" viewBox="0 0 10 9"><polygon points="1.90,1.40 8.60,1.40 5.25,7.00" fill="#555"/></svg>
<div class="t" style="left:1038.70px;top:166.96px;font-size:20.5px;color:#111;font-weight:normal;font-style:normal;transform:scaleX(0.9592);transform-origin:0 0;">%</div>
<div class="t" style="left:1075.80px;top:167.94px;font-size:13.8px;color:#111;font-weight:normal;font-style:normal;transform:scaleX(1.0674);transform-origin:0 0;">000</div>
<div class="r" style="left:1116px;top:159px;width:82px;height:32px;background:linear-gradient(180deg,#ffffff 0%,#f7f7f7 50%,#ececec 100%);border:1px solid #c3c3c3;border-bottom-color:#b3b3b3;border-radius:4px;box-sizing:border-box;box-shadow:0 0.5px 0.5px rgba(0,0,0,0.08);"></div>
<div class="r" style="left:1157px;top:159.5px;width:1px;height:31.0px;background:#d6d6d6;"></div>
<div class="t" style="left:1142.80px;top:164.05px;font-size:13.3px;color:#111;font-weight:normal;font-style:normal;transform:scaleX(1.0838);transform-origin:0 0;">0</div>
<div class="t" style="left:1135.60px;top:175.89px;font-size:11.5px;color:#111;font-weight:normal;font-style:normal;transform:scaleX(1.0419);transform-origin:0 0;">00</div>
<div class="t" style="left:1177.00px;top:165.89px;font-size:11.5px;color:#111;font-weight:normal;font-style:normal;">00</div>
<div class="t" style="left:1183.80px;top:175.05px;font-size:13.3px;color:#111;font-weight:normal;font-style:normal;transform:scaleX(0.8399);transform-origin:0 0;">0</div>
<svg class="r" style="left:1124px;top:164px" width="15" height="13" viewBox="0 0 15 13"><path d="M1.5 6.3 L6.5 1.3 V4.3 H13 V8.3 H6.5 V11.3z" fill="#3488dc"/></svg>
<svg class="r" style="left:1165px;top:176px" width="15" height="13" viewBox="0 0 15 13"><path d="M13.5 6.3 L8.5 1.3 V4.3 H2 V8.3 H8.5 V11.3z" fill="#3488dc"/></svg>
<div class="r" style="left:1211.3px;top:110px;width:1.0px;height:87.5px;background:#dcdcdc;"></div>
<svg class="r" style="left:1236px;top:117px" width="48" height="43" viewBox="0 0 48 43">
      <rect x="3" y="2" width="37" height="33.5" fill="#fff" stroke="#9a9a9a" stroke-width="1"/>
      <rect x="12.3" y="2" width="8.2" height="8.4" fill="#e67b7f"/>
      <rect x="12.3" y="10.4" width="13.5" height="8.4" fill="#5a9ae0"/>
      <rect x="12.3" y="18.8" width="17.5" height="8.4" fill="#e67b7f"/>
      <rect x="12.3" y="27.2" width="8.2" height="8.3" fill="#5a9ae0"/>
      <path d="M3 10.4 h37 M3 18.8 h37 M3 27.2 h37 M12.3 2 v33.5 M21.5 2 v33.5 M30.8 2 v33.5" stroke="#c8c8c8" stroke-width="0.8" fill="none"/>
      <rect x="23.8" y="22.8" width="20.5" height="17.5" fill="#fff" stroke="#9a9a9a" stroke-width="1"/>
      <text x="28" y="37" font-family="Liberation Sans" font-size="16" fill="#111">≠</text>
    </svg>
<svg class="r" style="left:1286px;top:132px" width="10" height="9" viewBox="0 0 10 9"><polygon points="1.10,1.90 7.50,1.90 4.30,7.00" fill="#555"/></svg>
<div class="t" style="left:1237.30px;top:167.04px;font-size:14.5px;color:#111;font-weight:normal;font-style:normal;transform:scaleX(1.0775);transform-origin:0 0;">Formato</div>
<div class="t" style="left:1225.90px;top:184.04px;font-size:14.5px;color:#111;font-weight:normal;font-style:normal;transform:scaleX(1.1065);transform-origin:0 0;">condicional</div>
<svg class="r" style="left:1328px;top:117px" width="52" height="44" viewBox="0 0 52 44">
      <rect x="3.5" y="3" width="37.5" height="31.5" fill="#fff" stroke="#9a9a9a" stroke-width="1"/>
      <rect x="12.5" y="11" width="28.5" height="23.5" fill="#cfe0f3"/>
      <path d="M3.5 11 h37.5 M3.5 19 h37.5 M3.5 27 h37.5 M12.5 3 v31.5 M21.5 3 v31.5 M30.5 3 v31.5" stroke="#c7d2dd" stroke-width="0.9" fill="none"/>
      <g transform="translate(26.7 32.6) rotate(-41)">
        <rect x="2" y="-3" width="29" height="6" rx="3" fill="#f6f6f6" stroke="#8d8d8d" stroke-width="0.9"/>
        <path d="M5 -1.2 H29" stroke="#d8d8d8" stroke-width="1.2"/>
        <ellipse cx="0" cy="0" rx="5.2" ry="5.6" fill="#daa55e" stroke="#a9783c" stroke-width="0.8"/>
        <path d="M-4.2 -4.3 Q-10.5 -5.8 -16 -2.6 Q-10.5 4.6 -3.6 4.6 Q-2.5 0 -4.2 -4.3z" fill="#2f7fd9" stroke="#1a62bd" stroke-width="0.6"/>
      </g>
    </svg>
<svg class="r" style="left:1380px;top:133px" width="10" height="9" viewBox="0 0 10 9"><polygon points="1.40,1.00 7.70,1.00 4.55,6.00" fill="#555"/></svg>
<div class="t" style="left:1317.30px;top:167.04px;font-size:14.5px;color:#111;font-weight:normal;font-style:normal;transform:scaleX(1.1011);transform-origin:0 0;">Dar formato</div>
<div class="t" style="left:1320.20px;top:184.04px;font-size:14.5px;color:#111;font-weight:normal;font-style:normal;transform:scaleX(1.1018);transform-origin:0 0;">como tabla</div>
<svg class="r" style="left:1412px;top:117px" width="52" height="44" viewBox="0 0 52 44">
      <rect x="3.5" y="3" width="37.5" height="31.5" fill="#fff" stroke="#9a9a9a" stroke-width="1"/>
      <rect x="10" y="9" width="26" height="17" fill="#cfe0f3" stroke="#b7cde6" stroke-width="0.8"/>
      <path d="M3.5 9 h37.5 M3.5 26 h37.5 M10 3 v31.5 M36 3 v31.5" stroke="#d0d0d0" stroke-width="0.8" fill="none"/>
      <g transform="translate(26.7 32.6) rotate(-41)">
        <rect x="2" y="-3" width="29" height="6" rx="3" fill="#f6f6f6" stroke="#8d8d8d" stroke-width="0.9"/>
        <path d="M5 -1.2 H29" stroke="#d8d8d8" stroke-width="1.2"/>
        <ellipse cx="0" cy="0" rx="5.2" ry="5.6" fill="#daa55e" stroke="#a9783c" stroke-width="0.8"/>
        <path d="M-4.2 -4.3 Q-10.5 -5.8 -16 -2.6 Q-10.5 4.6 -3.6 4.6 Q-2.5 0 -4.2 -4.3z" fill="#2f7fd9" stroke="#1a62bd" stroke-width="0.6"/>
      </g>
    </svg>
<svg class="r" style="left:1464px;top:133px" width="10" height="9" viewBox="0 0 10 9"><polygon points="1.20,1.00 7.50,1.00 4.35,6.00" fill="#555"/></svg>
<div class="t" style="left:1420.70px;top:167.04px;font-size:14.5px;color:#111;font-weight:normal;font-style:normal;transform:scaleX(1.0796);transform-origin:0 0;">Estilos</div>
<div class="t" style="left:1414.30px;top:184.04px;font-size:14.5px;color:#111;font-weight:normal;font-style:normal;transform:scaleX(1.0860);transform-origin:0 0;">de celda</div>
<div class="r" style="left:1489.3px;top:110px;width:1.0px;height:87.5px;background:#dcdcdc;"></div>
<svg class="r" style="left:1506px;top:108px" width="32" height="26" viewBox="0 0 32 26">
      <rect x="11.1" y="2.3" width="13.8" height="21.3" rx="1" fill="#fff" stroke="#9a9a9a" stroke-width="1"/>
      <path d="M11.1 7.8 h13.8 M11.1 14 h13.8 M11.1 18.8 h13.8 M18 2.3 v21.3" stroke="#c0c0c0" stroke-width="0.8"/>
      <rect x="12.9" y="7.8" width="15.5" height="6.2" fill="#4cb04f"/>
      <path d="M2.8 10.9 L10.5 5.6 V16.2z" fill="#4cb04f"/>
      <rect x="10" y="9.2" width="3.5" height="3.4" fill="#4cb04f"/>
    </svg>
<div class="t" style="left:1541.30px;top:114.99px;font-size:14.7px;color:#111;font-weight:normal;font-style:normal;transform:scaleX(1.0836);transform-origin:0 0;">Insertar</div>
<svg class="r" style="left:1605px;top:117px" width="10" height="9" viewBox="0 0 10 9"><polygon points="1.30,1.30 7.70,1.30 4.50,6.80" fill="#555"/></svg>
<svg class="r" style="left:1506px;top:141px" width="32" height="26" viewBox="0 0 32 26">
      <rect x="6.3" y="2" width="14.5" height="21.5" rx="1" fill="#fff" stroke="#9a9a9a" stroke-width="1"/>
      <path d="M6.3 7.3 h14.5 M6.3 13.7 h14.5 M6.3 18.6 h14.5 M13.5 2 v21.5" stroke="#c0c0c0" stroke-width="0.8"/>
      <rect x="2.8" y="7.3" width="15.9" height="6.4" fill="#e2474d"/>
      <path d="M22.3 7.7 l6.2 5.8 M28.5 7.7 l-6.2 5.8" stroke="#e2474d" stroke-width="1.8"/>
    </svg>
<div class="t" style="left:1541.30px;top:146.99px;font-size:14.7px;color:#111;font-weight:normal;font-style:normal;transform:scaleX(1.0345);transform-origin:0 0;">Eliminar</div>
<svg class="r" style="left:1605px;top:150px" width="10" height="8" viewBox="0 0 10 8"><polygon points="1.30,1.20 7.70,1.20 4.50,6.00" fill="#555"/></svg>
<svg class="r" style="left:1506px;top:171px" width="32" height="28" viewBox="0 0 32 28">
      <path d="M6.5 4.9 h13" stroke="#3a7fcf" stroke-width="1.2" fill="none"/>
      <path d="M8.8 2.8 L6 4.9 L8.8 7 M17.3 2.8 L20.1 4.9 L17.3 7z" fill="#3a7fcf"/>
      <rect x="4.2" y="2.6" width="1.3" height="4.6" fill="#3a7fcf"/><rect x="20.8" y="2.6" width="1.3" height="4.6" fill="#3a7fcf"/>
      <rect x="4.1" y="9.3" width="23.7" height="17.1" rx="1" fill="#fff" stroke="#9a9a9a" stroke-width="1"/>
      <path d="M4.1 14.1 h23.7 M4.1 21.6 h23.7 M9.1 9.3 v17.1 M17.2 9.3 v17.1 M22.5 9.3 v17.1" stroke="#d2d2d2" stroke-width="0.8"/>
      <rect x="9.1" y="14.1" width="8.1" height="7.5" fill="#3a7fcf"/>
    </svg>
<div class="t" style="left:1541.30px;top:179.99px;font-size:14.7px;color:#111;font-weight:normal;font-style:normal;transform:scaleX(1.0592);transform-origin:0 0;">Formato</div>
<svg class="r" style="left:1604px;top:182px" width="10" height="9" viewBox="0 0 10 9"><polygon points="1.00,1.70 7.20,1.70 4.10,7.10" fill="#555"/></svg>
<div class="r" style="left:1630.5px;top:110px;width:1.0px;height:87.5px;background:#dcdcdc;"></div>
<svg class="r" style="left:1652px;top:108px" width="24" height="26" viewBox="0 0 24 26">
      <path d="M2.5 1.9 H19.2 V7.8 H18 Q17.6 4.6 15.5 4.4 H7.6 L15.2 11.7 L6.8 21.3 H17.2 Q19.6 21.2 20 17.5 H20.8 V23.8 H2.5 V22.8 L11.6 12.4 L2.5 3.2z" fill="#6a6a6a"/>
    </svg>
<svg class="r" style="left:1683px;top:116px" width="10" height="10" viewBox="0 0 10 10"><polygon points="1.50,1.70 8.00,1.70 4.75,7.80" fill="#555"/></svg>
<svg class="r" style="left:1651px;top:140px" width="24" height="28" viewBox="0 0 24 28">
      <rect x="2.5" y="2.8" width="18.5" height="21.5" rx="1" fill="#fff" stroke="#9a9a9a" stroke-width="1"/>
      <rect x="3" y="3.3" width="17.5" height="3" fill="#bdbdbd"/>
      <path d="M11.8 9.5 v6" stroke="#2f80d8" stroke-width="3"/>
      <path d="M6.8 14 L11.8 19.5 L16.8 14z" fill="#2f80d8"/>
    </svg>
<svg class="r" style="left:1679px;top:150px" width="10" height="9" viewBox="0 0 10 9"><polygon points="1.40,1.00 7.80,1.00 4.60,6.00" fill="#555"/></svg>
<svg class="r" style="left:1649px;top:173px" width="28" height="27" viewBox="0 0 28 27">
      <g transform="rotate(-40 14 13.5)">
        <rect x="1.5" y="8" width="25" height="11" rx="2.5" fill="#e88aa0" stroke="#b5546d" stroke-width="0.9"/>
        <rect x="1.5" y="8" width="25" height="5" rx="2.5" fill="#f2b6c4"/>
      </g>
    </svg>
<svg class="r" style="left:1679px;top:182px" width="10" height="9" viewBox="0 0 10 9"><polygon points="1.40,1.70 7.80,1.70 4.60,7.00" fill="#555"/></svg>
<div class="t" style="left:1709.40px;top:118.06px;font-size:19.5px;color:#2f86dc;font-weight:bold;font-style:normal;transform:scaleX(1.0969);transform-origin:0 0;">A</div>
<div class="t" style="left:1710.70px;top:136.37px;font-size:20px;color:#666;font-weight:bold;font-style:normal;transform:scaleX(1.0492);transform-origin:0 0;">Z</div>
<svg class="r" style="left:1725px;top:121px" width="31" height="32" viewBox="0 0 31 32">
      <ellipse cx="15.3" cy="6.5" rx="12.5" ry="4" fill="#d8d8d8" stroke="#7a7a7a" stroke-width="1"/>
      <path d="M3 7.5 Q5 9 12 17.5 V28 Q15.3 31 18.5 28 V17.5 Q25.5 9 27.8 7.5 Q15.3 13 3 7.5z" fill="#8a8a8a"/>
    </svg>
<svg class="r" style="left:1756px;top:133px" width="10" height="9" viewBox="0 0 10 9"><polygon points="1.30,1.20 7.80,1.20 4.55,6.20" fill="#555"/></svg>
<div class="t" style="left:1707.90px;top:167.04px;font-size:14.5px;color:#111;font-weight:normal;font-style:normal;transform:scaleX(1.0674);transform-origin:0 0;">Ordenar</div>
<div class="t" style="left:1710.70px;top:184.04px;font-size:14.5px;color:#111;font-weight:normal;font-style:normal;transform:scaleX(1.1563);transform-origin:0 0;">y filtrar</div>
<div class="r" style="left:0px;top:205px;width:1824px;height:38px;background:#fff;"></div>
<div class="r" style="left:121px;top:205px;width:2px;height:38px;background:#e0e0e0;"></div>
<div class="r" style="left:0px;top:242px;width:1824px;height:1px;background:#9a9a9a;"></div>
<div class="r" style="left:0px;top:243px;width:1824px;height:2px;background:#e6e6e6;"></div>
<div class="r" style="left:0px;top:245px;width:1824px;height:1px;background:#b5b5b5;"></div>
<div class="t" style="left:15.40px;top:217.87px;font-size:17.5px;color:#111;font-weight:normal;font-style:normal;transform:scaleX(0.8649);transform-origin:0 0;">L6</div>
<svg class="r" style="left:102px;top:210px" width="14" height="28" viewBox="0 0 14 28"><path d="M2.4 9 L7 2.1 L11.6 9z M2.4 18 H11.6 L7 25.3z" fill="#666"/></svg>
<svg class="r" style="left:140px;top:214px" width="22" height="21" viewBox="0 0 22 21"><path d="M3.3 3.3 L17.6 17.6 M17.6 3.3 L3.3 17.6" stroke="#c9c9c9" stroke-width="2.4"/></svg>
<svg class="r" style="left:180px;top:214px" width="25" height="21" viewBox="0 0 25 21"><path d="M2.8 10.5 L8.6 16.6 L21.4 3.6" fill="none" stroke="#c9c9c9" stroke-width="2.6"/></svg>
<svg class="r" style="left:220px;top:208px" width="32" height="32" viewBox="0 0 32 32"><text x="4.3" y="24" font-family="Liberation Serif" font-style="italic" font-size="23" fill="#111">f</text><text x="12.5" y="24" font-family="Liberation Serif" font-style="italic" font-size="22" fill="#111">x</text></svg>
<div class="r" style="left:257px;top:214px;width:1px;height:21px;background:#dcdcdc;"></div>
<svg class="r" style="left:1807px;top:219px" width="13" height="11" viewBox="0 0 13 11"><polygon points="1.50,1.10 11.00,1.10 6.25,8.60" fill="#555"/></svg>
<div class="r" style="left:0px;top:246px;width:1824px;height:819px;background:#fff;"></div>
<div class="r" style="left:0px;top:246px;width:1824px;height:37px;background:linear-gradient(180deg,#fdfdfd,#f2f2f2);"></div>
<div class="r" style="left:1460px;top:246px;width:111px;height:37px;background:linear-gradient(180deg,#f0f0f0,#dedede);"></div>
<div class="r" style="left:0px;top:283px;width:40px;height:782px;background:linear-gradient(90deg,#f9f9f9 0%,#f7f7f7 60%,#f3f3f3 100%);"></div>
<div class="r" style="left:0px;top:424px;width:40px;height:26px;background:linear-gradient(90deg,#f4f4f4 0%,#e9e9e9 60%,#dcdcdc 100%);"></div>
<div class="r" style="left:398px;top:283px;width:1px;height:782px;background:#d0d0d0;"></div>
<div class="r" style="left:398px;top:246px;width:1px;height:37px;background:#e3e3e3;"></div>
<div class="r" style="left:640px;top:283px;width:1px;height:782px;background:#d0d0d0;"></div>
<div class="r" style="left:640px;top:246px;width:1px;height:37px;background:#e3e3e3;"></div>
<div class="r" style="left:793px;top:283px;width:1px;height:782px;background:#d0d0d0;"></div>
<div class="r" style="left:793px;top:246px;width:1px;height:37px;background:#e3e3e3;"></div>
<div class="r" style="left:904px;top:283px;width:1px;height:782px;background:#d0d0d0;"></div>
<div class="r" style="left:904px;top:246px;width:1px;height:37px;background:#e3e3e3;"></div>
<div class="r" style="left:1015px;top:283px;width:1px;height:782px;background:#d0d0d0;"></div>
<div class="r" style="left:1015px;top:246px;width:1px;height:37px;background:#e3e3e3;"></div>
<div class="r" style="left:1126px;top:283px;width:1px;height:782px;background:#d0d0d0;"></div>
<div class="r" style="left:1126px;top:246px;width:1px;height:37px;background:#e3e3e3;"></div>
<div class="r" style="left:1237px;top:283px;width:1px;height:782px;background:#d0d0d0;"></div>
<div class="r" style="left:1237px;top:246px;width:1px;height:37px;background:#e3e3e3;"></div>
<div class="r" style="left:1348px;top:283px;width:1px;height:782px;background:#d0d0d0;"></div>
<div class="r" style="left:1348px;top:246px;width:1px;height:37px;background:#e3e3e3;"></div>
<div class="r" style="left:1459px;top:283px;width:1px;height:782px;background:#d0d0d0;"></div>
<div class="r" style="left:1459px;top:246px;width:1px;height:37px;background:#e3e3e3;"></div>
<div class="r" style="left:1571px;top:283px;width:1px;height:782px;background:#d0d0d0;"></div>
<div class="r" style="left:1571px;top:246px;width:1px;height:37px;background:#e3e3e3;"></div>
<div class="r" style="left:1682px;top:283px;width:1px;height:782px;background:#d0d0d0;"></div>
<div class="r" style="left:1682px;top:246px;width:1px;height:37px;background:#e3e3e3;"></div>
<div class="r" style="left:1793px;top:283px;width:1px;height:782px;background:#d0d0d0;"></div>
<div class="r" style="left:1793px;top:246px;width:1px;height:37px;background:#e3e3e3;"></div>
<div class="r" style="left:1904px;top:283px;width:1px;height:782px;background:#d0d0d0;"></div>
<div class="r" style="left:1904px;top:246px;width:1px;height:37px;background:#e3e3e3;"></div>
<div class="r" style="left:41px;top:315px;width:1783px;height:1px;background:#d0d0d0;"></div>
<div class="r" style="left:0px;top:315px;width:40px;height:1px;background:#e2e2e2;"></div>
<div class="r" style="left:41px;top:342px;width:1783px;height:1px;background:#d0d0d0;"></div>
<div class="r" style="left:0px;top:342px;width:40px;height:1px;background:#e2e2e2;"></div>
<div class="r" style="left:41px;top:369px;width:1783px;height:1px;background:#d0d0d0;"></div>
<div class="r" style="left:0px;top:369px;width:40px;height:1px;background:#e2e2e2;"></div>
<div class="r" style="left:41px;top:396px;width:1783px;height:1px;background:#d0d0d0;"></div>
<div class="r" style="left:0px;top:396px;width:40px;height:1px;background:#e2e2e2;"></div>
<div class="r" style="left:41px;top:423px;width:1783px;height:1px;background:#d0d0d0;"></div>
<div class="r" style="left:0px;top:423px;width:40px;height:1px;background:#e2e2e2;"></div>
<div class="r" style="left:41px;top:450px;width:1783px;height:1px;background:#d0d0d0;"></div>
<div class="r" style="left:0px;top:450px;width:40px;height:1px;background:#e2e2e2;"></div>
<div class="r" style="left:41px;top:477px;width:1783px;height:1px;background:#d0d0d0;"></div>
<div class="r" style="left:0px;top:477px;width:40px;height:1px;background:#e2e2e2;"></div>
<div class="r" style="left:41px;top:505px;width:1783px;height:1px;background:#d0d0d0;"></div>
<div class="r" style="left:0px;top:505px;width:40px;height:1px;background:#e2e2e2;"></div>
<div class="r" style="left:41px;top:532px;width:1783px;height:1px;background:#d0d0d0;"></div>
<div class="r" style="left:0px;top:532px;width:40px;height:1px;background:#e2e2e2;"></div>
<div class="r" style="left:41px;top:559px;width:1783px;height:1px;background:#d0d0d0;"></div>
<div class="r" style="left:0px;top:559px;width:40px;height:1px;background:#e2e2e2;"></div>
<div class="r" style="left:41px;top:586px;width:1783px;height:1px;background:#d0d0d0;"></div>
<div class="r" style="left:0px;top:586px;width:40px;height:1px;background:#e2e2e2;"></div>
<div class="r" style="left:41px;top:613px;width:1783px;height:1px;background:#d0d0d0;"></div>
<div class="r" style="left:0px;top:613px;width:40px;height:1px;background:#e2e2e2;"></div>
<div class="r" style="left:41px;top:640px;width:1783px;height:1px;background:#d0d0d0;"></div>
<div class="r" style="left:0px;top:640px;width:40px;height:1px;background:#e2e2e2;"></div>
<div class="r" style="left:41px;top:667px;width:1783px;height:1px;background:#d0d0d0;"></div>
<div class="r" style="left:0px;top:667px;width:40px;height:1px;background:#e2e2e2;"></div>
<div class="r" style="left:41px;top:694px;width:1783px;height:1px;background:#d0d0d0;"></div>
<div class="r" style="left:0px;top:694px;width:40px;height:1px;background:#e2e2e2;"></div>
<div class="r" style="left:41px;top:721px;width:1783px;height:1px;background:#d0d0d0;"></div>
<div class="r" style="left:0px;top:721px;width:40px;height:1px;background:#e2e2e2;"></div>
<div class="r" style="left:41px;top:748px;width:1783px;height:1px;background:#d0d0d0;"></div>
<div class="r" style="left:0px;top:748px;width:40px;height:1px;background:#e2e2e2;"></div>
<div class="r" style="left:41px;top:775px;width:1783px;height:1px;background:#d0d0d0;"></div>
<div class="r" style="left:0px;top:775px;width:40px;height:1px;background:#e2e2e2;"></div>
<div class="r" style="left:41px;top:802px;width:1783px;height:1px;background:#d0d0d0;"></div>
<div class="r" style="left:0px;top:802px;width:40px;height:1px;background:#e2e2e2;"></div>
<div class="r" style="left:41px;top:829px;width:1783px;height:1px;background:#d0d0d0;"></div>
<div class="r" style="left:0px;top:829px;width:40px;height:1px;background:#e2e2e2;"></div>
<div class="r" style="left:41px;top:857px;width:1783px;height:1px;background:#d0d0d0;"></div>
<div class="r" style="left:0px;top:857px;width:40px;height:1px;background:#e2e2e2;"></div>
<div class="r" style="left:41px;top:884px;width:1783px;height:1px;background:#d0d0d0;"></div>
<div class="r" style="left:0px;top:884px;width:40px;height:1px;background:#e2e2e2;"></div>
<div class="r" style="left:41px;top:911px;width:1783px;height:1px;background:#d0d0d0;"></div>
<div class="r" style="left:0px;top:911px;width:40px;height:1px;background:#e2e2e2;"></div>
<div class="r" style="left:41px;top:938px;width:1783px;height:1px;background:#d0d0d0;"></div>
<div class="r" style="left:0px;top:938px;width:40px;height:1px;background:#e2e2e2;"></div>
<div class="r" style="left:41px;top:965px;width:1783px;height:1px;background:#d0d0d0;"></div>
<div class="r" style="left:0px;top:965px;width:40px;height:1px;background:#e2e2e2;"></div>
<div class="r" style="left:41px;top:992px;width:1783px;height:1px;background:#d0d0d0;"></div>
<div class="r" style="left:0px;top:992px;width:40px;height:1px;background:#e2e2e2;"></div>
<div class="r" style="left:41px;top:1019px;width:1783px;height:1px;background:#d0d0d0;"></div>
<div class="r" style="left:0px;top:1019px;width:40px;height:1px;background:#e2e2e2;"></div>
<div class="r" style="left:41px;top:1046px;width:1783px;height:1px;background:#d0d0d0;"></div>
<div class="r" style="left:0px;top:1046px;width:40px;height:1px;background:#e2e2e2;"></div>
<div class="r" style="left:41px;top:1073px;width:1783px;height:1px;background:#d0d0d0;"></div>
<div class="r" style="left:0px;top:1073px;width:40px;height:1px;background:#e2e2e2;"></div>
<div class="r" style="left:0px;top:282px;width:1824px;height:1px;background:#bdbdbd;"></div>
<div class="r" style="left:40px;top:246px;width:1px;height:819px;background:#bdbdbd;"></div>
<div class="t" style="left:214.18px;top:256.87px;font-size:17.5px;color:#3a3a3a;font-weight:normal;">B</div>
<div class="t" style="left:513.20px;top:256.87px;font-size:17.5px;color:#3a3a3a;font-weight:normal;">C</div>
<div class="t" style="left:711.18px;top:256.87px;font-size:17.5px;color:#3a3a3a;font-weight:normal;">E</div>
<div class="t" style="left:843.66px;top:256.87px;font-size:17.5px;color:#3a3a3a;font-weight:normal;">F</div>
<div class="t" style="left:953.17px;top:256.87px;font-size:17.5px;color:#3a3a3a;font-weight:normal;">G</div>
<div class="t" style="left:1064.70px;top:256.87px;font-size:17.5px;color:#3a3a3a;font-weight:normal;">H</div>
<div class="t" style="left:1179.55px;top:256.87px;font-size:17.5px;color:#3a3a3a;font-weight:normal;">I</div>
<div class="t" style="left:1288.62px;top:256.87px;font-size:17.5px;color:#3a3a3a;font-weight:normal;">J</div>
<div class="t" style="left:1398.18px;top:256.87px;font-size:17.5px;color:#3a3a3a;font-weight:normal;">K</div>
<div class="t" style="left:1510.16px;top:256.87px;font-size:17.5px;color:#1d6b39;font-weight:bold;">L</div>
<div class="t" style="left:1619.69px;top:256.87px;font-size:17.5px;color:#3a3a3a;font-weight:normal;">M</div>
<div class="t" style="left:1731.70px;top:256.87px;font-size:17.5px;color:#3a3a3a;font-weight:normal;">N</div>
<div class="t" style="left:1842.17px;top:256.87px;font-size:17.5px;color:#3a3a3a;font-weight:normal;">O</div>
<div class="r" style="left:1459.5px;top:280px;width:112.0px;height:3px;background:#1d6b39;"></div>
<svg class="r" style="left:8px;top:250px" width="32" height="31" viewBox="0 0 32 31"><polygon points="2.7,28.8 28.9,2.7 28.9,28.8" fill="#dcdcdc"/></svg>
<div class="r" style="left:41px;top:246px;width:2px;height:37px;background:#4d9068;"></div>
<div class="r" style="left:638.6px;top:246px;width:4.0px;height:37px;background:#0d5e22;"></div>
<div class="r" style="left:639.6px;top:246px;width:2.0px;height:37px;background:#4f8a62;"></div>
<div class="r" style="left:38.5px;top:424px;width:2.5px;height:26px;background:#1d6b39;"></div>
<div class="r" style="left:1458.4px;top:422.1px;width:114.39999999999986px;height:30.19999999999999px;border:2.6px solid #1d6b39;box-sizing:border-box;"></div>
<div class="r" style="left:1566.6px;top:446.2px;width:8.800000000000182px;height:8.800000000000011px;background:#1d6b39;border:1.2px solid #fff;box-sizing:border-box;"></div>
<div class="t" style="left:46.00px;top:290.96px;font-size:20.5px;color:#000;font-weight:bold;font-style:normal;transform:scaleX(1.0126);transform-origin:0 0;">Keyword</div>
<div class="t" style="left:405.30px;top:290.96px;font-size:20.5px;color:#000;font-weight:bold;font-style:normal;transform:scaleX(1.0170);transform-origin:0 0;">Avg. Monthly Searches</div>
<div class="t" style="left:645.80px;top:290.96px;font-size:20.5px;color:#000;font-weight:bold;font-style:normal;transform:scaleX(0.9820);transform-origin:0 0;">Suggested bid</div>
<div class="t" style="left:15.74px;top:293.87px;font-size:17.5px;color:#444;font-weight:normal;">1</div>
<div class="t" style="left:44.70px;top:321.87px;font-size:17.5px;color:#000;font-weight:normal;font-style:normal;">sneakers</div>
<div class="t" style="right:1193.50px;top:321.87px;font-size:17.5px;color:#000;font-weight:normal;transform:scaleX(1.0400);transform-origin:100% 0;">135.000</div>
<div class="t" style="right:1035.69px;top:321.87px;font-size:17.5px;color:#000;font-weight:normal;transform:scaleX(1.0300);transform-origin:100% 0;">$ 1,07</div>
<div class="t" style="left:15.74px;top:321.87px;font-size:17.5px;color:#444;font-weight:normal;">2</div>
<div class="t" style="left:44.70px;top:348.87px;font-size:17.5px;color:#000;font-weight:normal;font-style:normal;">slip on</div>
<div class="t" style="right:1193.50px;top:348.87px;font-size:17.5px;color:#000;font-weight:normal;transform:scaleX(1.0400);transform-origin:100% 0;">5.400</div>
<div class="t" style="right:1035.69px;top:348.87px;font-size:17.5px;color:#000;font-weight:normal;transform:scaleX(1.0300);transform-origin:100% 0;">$ 1,30</div>
<div class="t" style="left:15.74px;top:348.87px;font-size:17.5px;color:#444;font-weight:normal;">3</div>
<div class="t" style="left:44.70px;top:375.87px;font-size:17.5px;color:#000;font-weight:normal;font-style:normal;">skate shoes</div>
<div class="t" style="right:1193.50px;top:375.87px;font-size:17.5px;color:#000;font-weight:normal;transform:scaleX(1.0400);transform-origin:100% 0;">49.500</div>
<div class="t" style="right:1035.69px;top:375.87px;font-size:17.5px;color:#000;font-weight:normal;transform:scaleX(1.0300);transform-origin:100% 0;">$ 0,86</div>
<div class="t" style="left:15.74px;top:375.87px;font-size:17.5px;color:#444;font-weight:normal;">4</div>
<div class="t" style="left:44.70px;top:402.87px;font-size:17.5px;color:#000;font-weight:normal;font-style:normal;">casual shoes</div>
<div class="t" style="right:1193.50px;top:402.87px;font-size:17.5px;color:#000;font-weight:normal;transform:scaleX(1.0400);transform-origin:100% 0;">14.800</div>
<div class="t" style="right:1035.69px;top:402.87px;font-size:17.5px;color:#000;font-weight:normal;transform:scaleX(1.0300);transform-origin:100% 0;">$ 1,13</div>
<div class="t" style="left:15.74px;top:402.87px;font-size:17.5px;color:#444;font-weight:normal;">5</div>
<div class="t" style="left:44.70px;top:429.87px;font-size:17.5px;color:#000;font-weight:normal;font-style:normal;">comfortable shoes</div>
<div class="t" style="right:1193.50px;top:429.87px;font-size:17.5px;color:#000;font-weight:normal;transform:scaleX(1.0400);transform-origin:100% 0;">27.100</div>
<div class="t" style="right:1035.69px;top:429.87px;font-size:17.5px;color:#000;font-weight:normal;transform:scaleX(1.0300);transform-origin:100% 0;">$ 1,33</div>
<div class="t" style="left:15.74px;top:429.87px;font-size:17.5px;color:#1d6b39;font-weight:bold;">6</div>
<div class="t" style="left:44.70px;top:456.87px;font-size:17.5px;color:#000;font-weight:normal;font-style:normal;">mens sneakers</div>
<div class="t" style="right:1193.50px;top:456.87px;font-size:17.5px;color:#000;font-weight:normal;transform:scaleX(1.0400);transform-origin:100% 0;">18.100</div>
<div class="t" style="right:1035.69px;top:456.87px;font-size:17.5px;color:#000;font-weight:normal;transform:scaleX(1.0300);transform-origin:100% 0;">$ 1,59</div>
<div class="t" style="left:15.74px;top:456.87px;font-size:17.5px;color:#444;font-weight:normal;">7</div>
<div class="t" style="left:44.79px;top:484.87px;font-size:17.5px;color:#000;font-weight:normal;font-style:normal;">womens sneakers</div>
<div class="t" style="right:1193.50px;top:484.87px;font-size:17.5px;color:#000;font-weight:normal;transform:scaleX(1.0400);transform-origin:100% 0;">22.200</div>
<div class="t" style="right:1035.69px;top:484.87px;font-size:17.5px;color:#000;font-weight:normal;transform:scaleX(1.0300);transform-origin:100% 0;">$ 1,55</div>
<div class="t" style="left:15.74px;top:484.87px;font-size:17.5px;color:#444;font-weight:normal;">8</div>
<div class="t" style="left:44.70px;top:511.87px;font-size:17.5px;color:#000;font-weight:normal;font-style:normal;">athletic shoes</div>
<div class="t" style="right:1193.50px;top:511.87px;font-size:17.5px;color:#000;font-weight:normal;transform:scaleX(1.0400);transform-origin:100% 0;">12.100</div>
<div class="t" style="right:1035.69px;top:511.87px;font-size:17.5px;color:#000;font-weight:normal;transform:scaleX(1.0300);transform-origin:100% 0;">$ 1,50</div>
<div class="t" style="left:15.74px;top:511.87px;font-size:17.5px;color:#444;font-weight:normal;">9</div>
<div class="t" style="left:44.70px;top:538.87px;font-size:17.5px;color:#000;font-weight:normal;font-style:normal;">street shoes</div>
<div class="t" style="right:1193.50px;top:538.87px;font-size:17.5px;color:#000;font-weight:normal;transform:scaleX(1.0400);transform-origin:100% 0;">590</div>
<div class="t" style="right:1035.69px;top:538.87px;font-size:17.5px;color:#000;font-weight:normal;transform:scaleX(1.0300);transform-origin:100% 0;">$ 1,00</div>
<div class="t" style="left:10.89px;top:538.87px;font-size:17.5px;color:#444;font-weight:normal;">10</div>
<div class="t" style="left:44.70px;top:565.87px;font-size:17.5px;color:#000;font-weight:normal;font-style:normal;">cheap sneakers</div>
<div class="t" style="right:1193.50px;top:565.87px;font-size:17.5px;color:#000;font-weight:normal;transform:scaleX(1.0400);transform-origin:100% 0;">9.900</div>
<div class="t" style="right:1035.69px;top:565.87px;font-size:17.5px;color:#000;font-weight:normal;transform:scaleX(1.0300);transform-origin:100% 0;">$ 0,81</div>
<div class="t" style="left:11.50px;top:565.87px;font-size:17.5px;color:#444;font-weight:normal;">11</div>
<div class="t" style="left:44.70px;top:592.87px;font-size:17.5px;color:#000;font-weight:normal;font-style:normal;">leather sneakers</div>
<div class="t" style="right:1193.50px;top:592.87px;font-size:17.5px;color:#000;font-weight:normal;transform:scaleX(1.0400);transform-origin:100% 0;">5.400</div>
<div class="t" style="right:1035.69px;top:592.87px;font-size:17.5px;color:#000;font-weight:normal;transform:scaleX(1.0300);transform-origin:100% 0;">$ 2,12</div>
<div class="t" style="left:10.89px;top:592.87px;font-size:17.5px;color:#444;font-weight:normal;">12</div>
<div class="t" style="left:44.70px;top:619.87px;font-size:17.5px;color:#000;font-weight:normal;font-style:normal;">canvas sneakers</div>
<div class="t" style="right:1193.50px;top:619.87px;font-size:17.5px;color:#000;font-weight:normal;transform:scaleX(1.0400);transform-origin:100% 0;">3.600</div>
<div class="t" style="right:1035.69px;top:619.87px;font-size:17.5px;color:#000;font-weight:normal;transform:scaleX(1.0300);transform-origin:100% 0;">$ 1,56</div>
<div class="t" style="left:10.89px;top:619.87px;font-size:17.5px;color:#444;font-weight:normal;">13</div>
<div class="t" style="left:44.70px;top:646.87px;font-size:17.5px;color:#000;font-weight:normal;font-style:normal;">urban shoes</div>
<div class="t" style="right:1193.50px;top:646.87px;font-size:17.5px;color:#000;font-weight:normal;transform:scaleX(1.0400);transform-origin:100% 0;">1.000</div>
<div class="t" style="right:1035.69px;top:646.87px;font-size:17.5px;color:#000;font-weight:normal;transform:scaleX(1.0300);transform-origin:100% 0;">$ 0,78</div>
<div class="t" style="left:10.89px;top:646.87px;font-size:17.5px;color:#444;font-weight:normal;">14</div>
<div class="t" style="left:44.70px;top:673.87px;font-size:17.5px;color:#000;font-weight:normal;font-style:normal;">suede sneakers</div>
<div class="t" style="right:1193.50px;top:673.87px;font-size:17.5px;color:#000;font-weight:normal;transform:scaleX(1.0400);transform-origin:100% 0;">1.600</div>
<div class="t" style="right:1035.69px;top:673.87px;font-size:17.5px;color:#000;font-weight:normal;transform:scaleX(1.0300);transform-origin:100% 0;">$ 1,46</div>
<div class="t" style="left:10.89px;top:673.87px;font-size:17.5px;color:#444;font-weight:normal;">15</div>
<div class="t" style="left:44.70px;top:700.87px;font-size:17.5px;color:#000;font-weight:normal;font-style:normal;">luxury sneakers</div>
<div class="t" style="right:1193.50px;top:700.87px;font-size:17.5px;color:#000;font-weight:normal;transform:scaleX(1.0400);transform-origin:100% 0;">1.000</div>
<div class="t" style="right:1035.69px;top:700.87px;font-size:17.5px;color:#000;font-weight:normal;transform:scaleX(1.0300);transform-origin:100% 0;">$ 1,81</div>
<div class="t" style="left:10.89px;top:700.87px;font-size:17.5px;color:#444;font-weight:normal;">16</div>
<div class="t" style="left:44.70px;top:727.87px;font-size:17.5px;color:#000;font-weight:normal;font-style:normal;">sneaker</div>
<div class="t" style="right:1193.50px;top:727.87px;font-size:17.5px;color:#000;font-weight:normal;transform:scaleX(1.0400);transform-origin:100% 0;">22.200</div>
<div class="t" style="right:1035.69px;top:727.87px;font-size:17.5px;color:#000;font-weight:normal;transform:scaleX(1.0300);transform-origin:100% 0;">$ 1,11</div>
<div class="t" style="left:10.89px;top:727.87px;font-size:17.5px;color:#444;font-weight:normal;">17</div>
<div class="t" style="left:44.70px;top:754.87px;font-size:17.5px;color:#000;font-weight:normal;font-style:normal;">cheap shoes</div>
<div class="t" style="right:1193.50px;top:754.87px;font-size:17.5px;color:#000;font-weight:normal;transform:scaleX(1.0400);transform-origin:100% 0;">49.500</div>
<div class="t" style="right:1035.69px;top:754.87px;font-size:17.5px;color:#000;font-weight:normal;transform:scaleX(1.0300);transform-origin:100% 0;">$ 0,78</div>
<div class="t" style="left:10.89px;top:754.87px;font-size:17.5px;color:#444;font-weight:normal;">18</div>
<div class="t" style="left:44.70px;top:781.87px;font-size:17.5px;color:#000;font-weight:normal;font-style:normal;">mens shoes</div>
<div class="t" style="right:1193.50px;top:781.87px;font-size:17.5px;color:#000;font-weight:normal;transform:scaleX(1.0400);transform-origin:100% 0;">110.000</div>
<div class="t" style="right:1035.69px;top:781.87px;font-size:17.5px;color:#000;font-weight:normal;transform:scaleX(1.0300);transform-origin:100% 0;">$ 1,23</div>
<div class="t" style="left:10.89px;top:781.87px;font-size:17.5px;color:#444;font-weight:normal;">19</div>
<div class="t" style="left:44.70px;top:808.87px;font-size:17.5px;color:#000;font-weight:normal;font-style:normal;">shoes</div>
<div class="t" style="right:1193.50px;top:808.87px;font-size:17.5px;color:#000;font-weight:normal;transform:scaleX(1.0400);transform-origin:100% 0;">823.000</div>
<div class="t" style="right:1035.69px;top:808.87px;font-size:17.5px;color:#000;font-weight:normal;transform:scaleX(1.0300);transform-origin:100% 0;">$ 1,08</div>
<div class="t" style="left:10.89px;top:808.87px;font-size:17.5px;color:#444;font-weight:normal;">20</div>
<div class="t" style="left:44.70px;top:836.87px;font-size:17.5px;color:#000;font-weight:normal;font-style:normal;">running shoes</div>
<div class="t" style="right:1193.50px;top:836.87px;font-size:17.5px;color:#000;font-weight:normal;transform:scaleX(1.0400);transform-origin:100% 0;">135.000</div>
<div class="t" style="right:1035.69px;top:836.87px;font-size:17.5px;color:#000;font-weight:normal;transform:scaleX(1.0300);transform-origin:100% 0;">$ 1,76</div>
<div class="t" style="left:10.89px;top:836.87px;font-size:17.5px;color:#444;font-weight:normal;">21</div>
<div class="t" style="left:44.70px;top:863.87px;font-size:17.5px;color:#000;font-weight:normal;font-style:normal;">tennis shoes</div>
<div class="t" style="right:1193.50px;top:863.87px;font-size:17.5px;color:#000;font-weight:normal;transform:scaleX(1.0400);transform-origin:100% 0;">60.500</div>
<div class="t" style="right:1035.69px;top:863.87px;font-size:17.5px;color:#000;font-weight:normal;transform:scaleX(1.0300);transform-origin:100% 0;">$ 1,21</div>
<div class="t" style="left:10.89px;top:863.87px;font-size:17.5px;color:#444;font-weight:normal;">22</div>
<div class="t" style="left:44.70px;top:890.87px;font-size:17.5px;color:#000;font-weight:normal;font-style:normal;">shoes online</div>
<div class="t" style="right:1193.50px;top:890.87px;font-size:17.5px;color:#000;font-weight:normal;transform:scaleX(1.0400);transform-origin:100% 0;">49.500</div>
<div class="t" style="right:1035.69px;top:890.87px;font-size:17.5px;color:#000;font-weight:normal;transform:scaleX(1.0300);transform-origin:100% 0;">$ 1,10</div>
<div class="t" style="left:10.89px;top:890.87px;font-size:17.5px;color:#444;font-weight:normal;">23</div>
<div class="t" style="left:44.70px;top:917.87px;font-size:17.5px;color:#000;font-weight:normal;font-style:normal;">basketball shoes</div>
<div class="t" style="right:1193.50px;top:917.87px;font-size:17.5px;color:#000;font-weight:normal;transform:scaleX(1.0400);transform-origin:100% 0;">201.000</div>
<div class="t" style="right:1035.69px;top:917.87px;font-size:17.5px;color:#000;font-weight:normal;transform:scaleX(1.0300);transform-origin:100% 0;">$ 1,00</div>
<div class="t" style="left:10.89px;top:917.87px;font-size:17.5px;color:#444;font-weight:normal;">24</div>
<div class="t" style="left:44.70px;top:944.87px;font-size:17.5px;color:#000;font-weight:normal;font-style:normal;">boat shoes</div>
<div class="t" style="right:1193.50px;top:944.87px;font-size:17.5px;color:#000;font-weight:normal;transform:scaleX(1.0400);transform-origin:100% 0;">60.500</div>
<div class="t" style="right:1035.69px;top:944.87px;font-size:17.5px;color:#000;font-weight:normal;transform:scaleX(1.0300);transform-origin:100% 0;">$ 1,35</div>
<div class="t" style="left:10.89px;top:944.87px;font-size:17.5px;color:#444;font-weight:normal;">25</div>
<div class="t" style="left:44.70px;top:971.87px;font-size:17.5px;color:#000;font-weight:normal;font-style:normal;">shoes for men</div>
<div class="t" style="right:1193.50px;top:971.87px;font-size:17.5px;color:#000;font-weight:normal;transform:scaleX(1.0400);transform-origin:100% 0;">27.100</div>
<div class="t" style="right:1035.69px;top:971.87px;font-size:17.5px;color:#000;font-weight:normal;transform:scaleX(1.0300);transform-origin:100% 0;">$ 1,39</div>
<div class="t" style="left:10.89px;top:971.87px;font-size:17.5px;color:#444;font-weight:normal;">26</div>
<div class="t" style="left:45.14px;top:998.87px;font-size:17.5px;color:#000;font-weight:normal;font-style:normal;">jordan</div>
<div class="t" style="right:1193.50px;top:998.87px;font-size:17.5px;color:#000;font-weight:normal;transform:scaleX(1.0400);transform-origin:100% 0;">1.500.000</div>
<div class="t" style="right:1035.69px;top:998.87px;font-size:17.5px;color:#000;font-weight:normal;transform:scaleX(1.0300);transform-origin:100% 0;">$ 0,73</div>
<div class="t" style="left:10.89px;top:998.87px;font-size:17.5px;color:#444;font-weight:normal;">27</div>
<div class="t" style="left:44.70px;top:1025.87px;font-size:17.5px;color:#000;font-weight:normal;font-style:normal;">discount shoes</div>
<div class="t" style="right:1193.50px;top:1025.87px;font-size:17.5px;color:#000;font-weight:normal;transform:scaleX(1.0400);transform-origin:100% 0;">18.100</div>
<div class="t" style="right:1035.69px;top:1025.87px;font-size:17.5px;color:#000;font-weight:normal;transform:scaleX(1.0300);transform-origin:100% 0;">$ 0,96</div>
<div class="t" style="left:10.89px;top:1025.87px;font-size:17.5px;color:#444;font-weight:normal;">28</div>
<div class="t" style="left:44.70px;top:1052.87px;font-size:17.5px;color:#000;font-weight:normal;font-style:normal;">ecco shoes</div>
<div class="t" style="right:1193.50px;top:1052.87px;font-size:17.5px;color:#000;font-weight:normal;transform:scaleX(1.0400);transform-origin:100% 0;">74.000</div>
<div class="t" style="right:1035.69px;top:1052.87px;font-size:17.5px;color:#000;font-weight:normal;transform:scaleX(1.0300);transform-origin:100% 0;">$ 1,39</div>
<div class="t" style="left:10.89px;top:1052.87px;font-size:17.5px;color:#444;font-weight:normal;">29</div>
<div class="r" style="left:0px;top:1065px;width:1824px;height:37px;background:linear-gradient(180deg,#f2f2f2,#eeeeee);"></div>
<div class="r" style="left:0px;top:1065px;width:1824px;height:1px;background:#c9c9c9;"></div>
<div class="r" style="left:86.5px;top:1065px;width:168.2px;height:31px;background:#fff;border-radius:0 0 5px 5px;box-shadow:0 1px 1.5px rgba(0,0,0,.3);"></div>
<div class="t" style="left:103.40px;top:1073.87px;font-size:17.5px;color:#1e7b3d;font-weight:bold;font-style:normal;transform:scaleX(0.9702);transform-origin:0 0;">oberlo keywords</div>
<div class="r" style="left:309px;top:1066px;width:1px;height:30px;background:#d5d5d5;"></div>
<svg class="r" style="left:18px;top:1074px" width="52" height="20" viewBox="0 0 52 20"><polygon points="3.4,10 13.5,3 13.5,16.8" fill="#9a9a9a"/><polygon points="35.7,3 46.3,10 35.7,16.8" fill="#9a9a9a"/></svg>
<svg class="r" style="left:274px;top:1073px" width="19" height="19" viewBox="0 0 19 19"><path d="M2.2 9.3 H16.5 M9.3 2.2 V16.5" stroke="#555" stroke-width="2.8"/></svg>
<div class="r" style="left:0px;top:1101.5px;width:1824px;height:32.5px;background:linear-gradient(180deg,#e7e7e7,#d9d9d9);border-top:1px solid #a9a9a9;box-sizing:border-box;border-radius:0 0 7px 7px;"></div>
<div class="t" style="left:35.60px;top:1110.97px;font-size:16.5px;color:#3a3a3a;font-weight:normal;font-style:normal;transform:scaleX(1.0714);transform-origin:0 0;">Listo</div>
<div class="t" style="left:1747.00px;top:1110.91px;font-size:17px;color:#3a3a3a;font-weight:normal;font-style:normal;transform:scaleX(0.9444);transform-origin:0 0;">120%</div>
<div class="r" style="left:1348.3px;top:1102.5px;width:52.200000000000045px;height:31.5px;background:#b3b3b3;"></div>
<svg class="r" style="left:1363px;top:1107px" width="23" height="22" viewBox="0 0 23 22"><g fill="#fff"><rect x="2.5" y="1.8" width="4.6" height="4.6" rx="0.6"/><rect x="2.5" y="7.9" width="4.6" height="4.6" rx="0.6"/><rect x="2.5" y="14.0" width="4.6" height="4.6" rx="0.6"/><rect x="8.6" y="1.8" width="4.6" height="4.6" rx="0.6"/><rect x="8.6" y="7.9" width="4.6" height="4.6" rx="0.6"/><rect x="8.6" y="14.0" width="4.6" height="4.6" rx="0.6"/><rect x="14.7" y="1.8" width="4.6" height="4.6" rx="0.6"/><rect x="14.7" y="7.9" width="4.6" height="4.6" rx="0.6"/><rect x="14.7" y="14.0" width="4.6" height="4.6" rx="0.6"/></g><rect x="2" y="1.3" width="19" height="19" fill="none" stroke="#fff" stroke-width="0.8" rx="1.5"/></svg>
<svg class="r" style="left:1414px;top:1107px" width="23" height="22" viewBox="0 0 23 22"><rect x="2.3" y="1.8" width="18.7" height="17.8" fill="none" stroke="#555" stroke-width="1.3"/><rect x="5.6" y="4.6" width="12" height="12.2" fill="none" stroke="#555" stroke-width="1"/><path d="M8 8 h7.3 M8 10.7 h7.3 M8 13.4 h7.3" stroke="#555" stroke-width="1"/></svg>
<div class="r" style="left:1480.4px;top:1117px;width:11.5px;height:2.5px;background:#666;"></div>
<div class="r" style="left:1521.8px;top:1116px;width:139.60000000000014px;height:5px;background:#a3a3a3;border-radius:2.5px;"></div>
<div class="r" style="left:1587px;top:1109.2px;width:17.200000000000045px;height:17.200000000000045px;background:#fff;border-radius:50%;box-shadow:0 0.5px 1.5px rgba(0,0,0,.45);"></div>
<svg class="r" style="left:1689px;top:1109px" width="17" height="17" viewBox="0 0 17 17"><path d="M2.3 8.5 H14.6 M8.45 2.4 V14.6" stroke="#555" stroke-width="2.5"/></svg>
<div class="r" style="left:0px;top:1134px;width:1824px;height:6px;background:linear-gradient(90deg,#22354a 0%,#1f3440 40%,#1c3024 70%,#173a1e 100%);"></div>
</body></html>
